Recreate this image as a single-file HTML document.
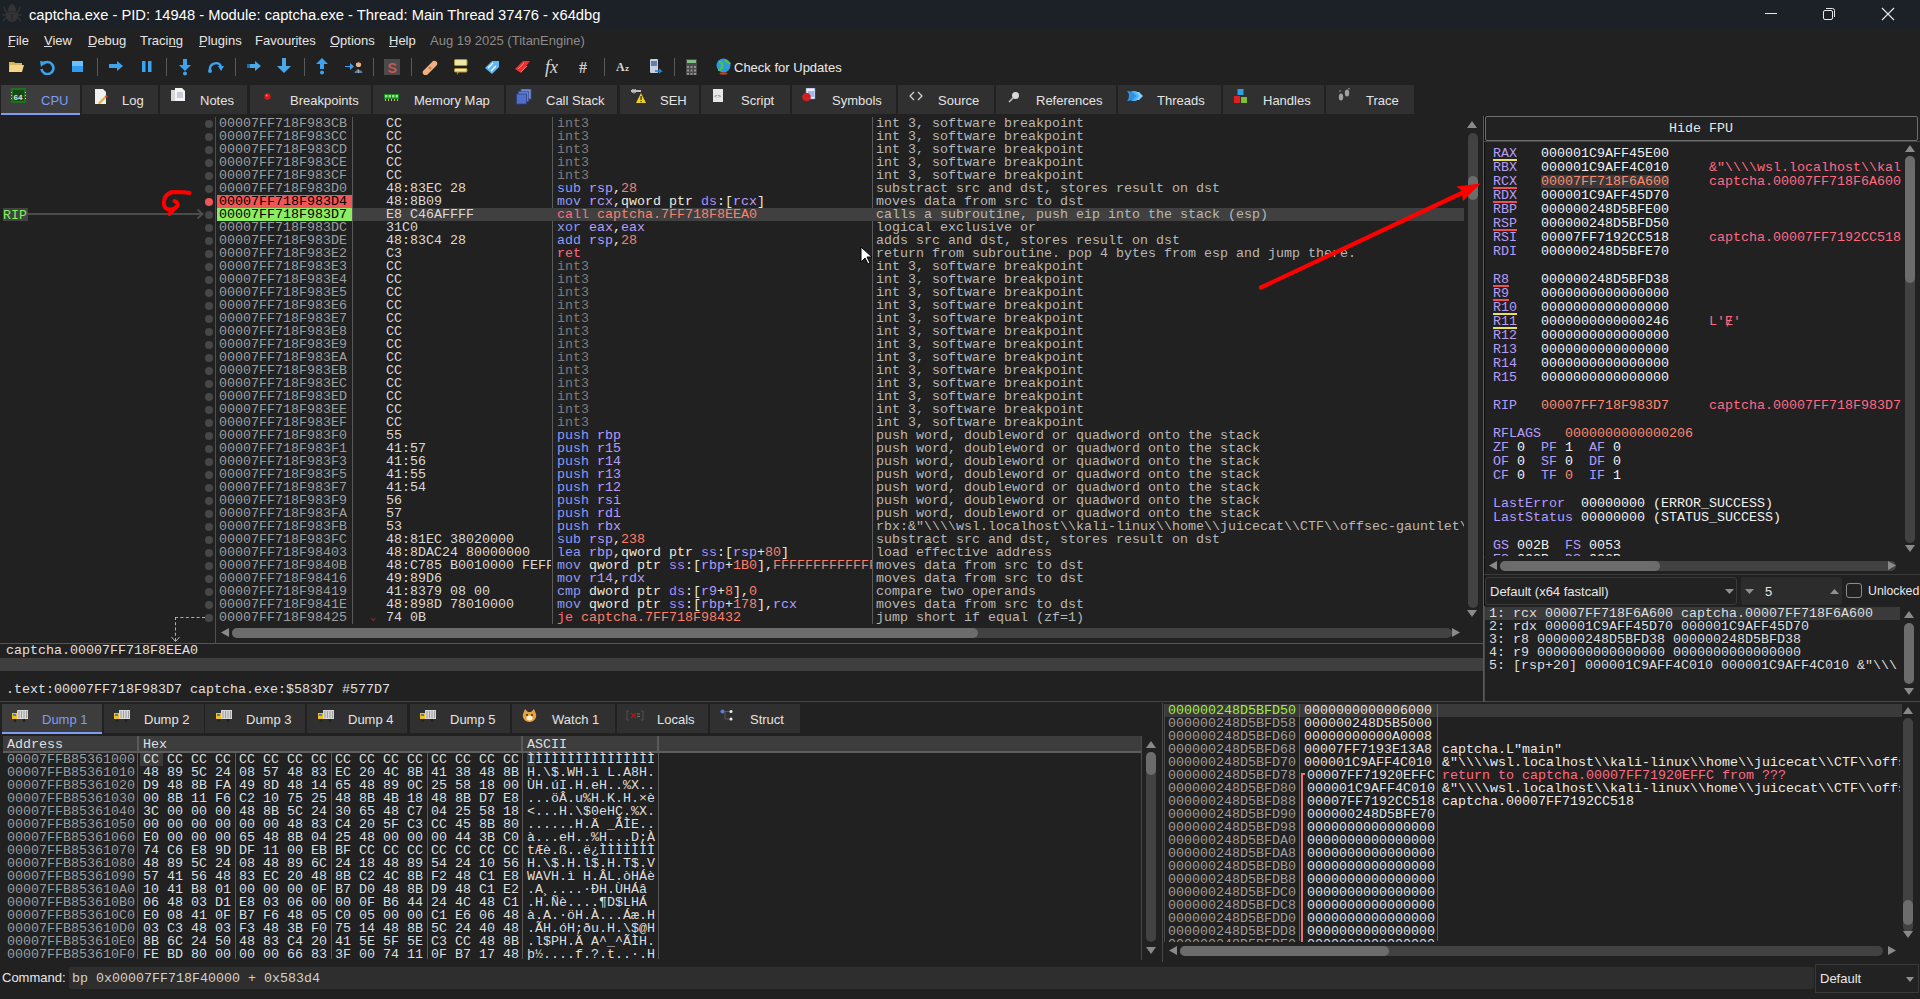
<!DOCTYPE html>
<html><head><meta charset="utf-8"><style>
html,body{margin:0;padding:0;width:1920px;height:999px;overflow:hidden;background:#212121;}
body>div,body>span,body>svg{position:absolute;}
.m{position:absolute;font-family:"Liberation Mono",monospace;font-size:13.333px;line-height:13px;white-space:pre;}
.s{position:absolute;font-family:"Liberation Sans",sans-serif;line-height:1;white-space:pre;}
</style></head><body>
<div style="left:0px;top:0px;width:1920px;height:29px;background:#1c2027;"></div>
<svg style="position:absolute;left:0;top:0" width="26" height="28" viewBox="0 0 26 28"><g fill="#343434"><path d="M7.5 11.5Q9 4 12 4Q15 4 16.5 11.5Z"/><path d="M6 13Q12 11 18 13L18 17Q16 22 12 22Q8 22 6 17Z"/></g><g stroke="#343434" stroke-width="1.4" fill="none"><path d="M4 6.5Q4.5 11 7.5 13"/><path d="M20 6.5Q19.5 11 16.5 13"/><path d="M2 14.8H22"/><path d="M3.2 21.5Q4 18.5 7 17.5"/><path d="M20.8 21.5Q20 18.5 17 17.5"/></g><path d="M12 14V21" stroke="#222" stroke-width="1"/></svg>
<span class="s" style="left:29px;top:7.5px;color:#ffffff;font-size:14.72px;">captcha.exe - PID: 14948 - Module: captcha.exe - Thread: Main Thread 37476 - x64dbg</span>
<div style="left:1765px;top:13px;width:12px;height:1px;background:#e8e8e8;"></div>
<svg style="position:absolute;left:1822px;top:7px" width="14" height="14" viewBox="0 0 14 14"><rect x="1.5" y="3.5" width="9" height="9" rx="1.5" fill="none" stroke="#e8e8e8" stroke-width="1"/><path d="M4 1.5h6.5a2 2 0 0 1 2 2V10" fill="none" stroke="#e8e8e8" stroke-width="1"/></svg>
<svg style="position:absolute;left:1881px;top:7px" width="14" height="14" viewBox="0 0 14 14"><path d="M1 1L13 13M13 1L1 13" stroke="#e8e8e8" stroke-width="1.1"/></svg>
<div style="left:0px;top:29px;width:1920px;height:23px;background:#212121;"></div>
<span class="s" style="left:8px;top:34px;color:#e6e6e6;font-size:13px;">File</span>
<span class="s" style="left:44px;top:34px;color:#e6e6e6;font-size:13px;">View</span>
<span class="s" style="left:88px;top:34px;color:#e6e6e6;font-size:13px;">Debug</span>
<span class="s" style="left:140px;top:34px;color:#e6e6e6;font-size:13px;">Tracing</span>
<span class="s" style="left:199px;top:34px;color:#e6e6e6;font-size:13px;">Plugins</span>
<span class="s" style="left:255px;top:34px;color:#e6e6e6;font-size:13px;">Favourites</span>
<span class="s" style="left:330px;top:34px;color:#e6e6e6;font-size:13px;">Options</span>
<span class="s" style="left:389px;top:34px;color:#e6e6e6;font-size:13px;">Help</span>
<div style="left:8px;top:46px;width:7px;height:1px;background:#d8d8d8;"></div>
<div style="left:44px;top:46px;width:8px;height:1px;background:#d8d8d8;"></div>
<div style="left:88px;top:46px;width:8px;height:1px;background:#d8d8d8;"></div>
<div style="left:169px;top:46px;width:7px;height:1px;background:#d8d8d8;"></div>
<div style="left:199px;top:46px;width:7px;height:1px;background:#d8d8d8;"></div>
<div style="left:294px;top:46px;width:3px;height:1px;background:#d8d8d8;"></div>
<div style="left:330px;top:46px;width:8px;height:1px;background:#d8d8d8;"></div>
<div style="left:389px;top:46px;width:8px;height:1px;background:#d8d8d8;"></div>
<span class="s" style="left:430px;top:34px;color:#8c8c8c;font-size:13px;">Aug 19 2025 (TitanEngine)</span>
<div style="left:0px;top:52px;width:1920px;height:32px;background:#212121;"></div>
<div style="left:97px;top:58px;width:1px;height:18px;background:#5a5a5a;"></div>
<div style="left:166px;top:58px;width:1px;height:18px;background:#5a5a5a;"></div>
<div style="left:235px;top:58px;width:1px;height:18px;background:#5a5a5a;"></div>
<div style="left:304px;top:58px;width:1px;height:18px;background:#5a5a5a;"></div>
<div style="left:373px;top:58px;width:1px;height:18px;background:#5a5a5a;"></div>
<div style="left:411px;top:58px;width:1px;height:18px;background:#5a5a5a;"></div>
<div style="left:604px;top:58px;width:1px;height:18px;background:#5a5a5a;"></div>
<div style="left:674px;top:58px;width:1px;height:18px;background:#5a5a5a;"></div>
<svg style="position:absolute;left:8px;top:59px" width="17" height="14" viewBox="0 0 17 14"><path d="M1 3h5l1 1h7v9H1z" fill="#d8b25c"/><path d="M2 6h14l-2 7H1z" fill="#f2d48a"/></svg>
<svg style="position:absolute;left:39px;top:60px" width="16" height="15" viewBox="0 0 16 15"><path d="M4 4a6 6 0 1 1-1.5 5" fill="none" stroke="#3aa4f0" stroke-width="2.6"/><path d="M1 1l6 1-5 5z" fill="#3aa4f0"/></svg>
<svg style="position:absolute;left:72px;top:61px" width="11" height="11" viewBox="0 0 11 11"><rect width="11" height="11" fill="#2f9cf0"/><rect width="11" height="5" fill="#6cc0ff"/></svg>
<svg style="position:absolute;left:108px;top:60px" width="16" height="12" viewBox="0 0 16 12"><path d="M1 4h8V1l6 5-6 5V8H1z" fill="#3aa4f0"/></svg>
<svg style="position:absolute;left:142px;top:61px" width="10" height="11" viewBox="0 0 10 11"><rect x="0" y="0" width="3.5" height="11" fill="#3aa4f0"/><rect x="6" y="0" width="3.5" height="11" fill="#3aa4f0"/></svg>
<svg style="position:absolute;left:179px;top:59px" width="13" height="17" viewBox="0 0 13 17"><path d="M4 0h4v6h4l-6 6-6-6h4z" fill="#3aa4f0"/><circle cx="6" cy="14.5" r="2" fill="#3aa4f0"/></svg>
<svg style="position:absolute;left:207px;top:61px" width="18" height="12" viewBox="0 0 18 12"><path d="M3 9a6 6 0 0 1 11-4" fill="none" stroke="#3aa4f0" stroke-width="2.4"/><path d="M11 5h6l-3 5z" fill="#3aa4f0"/><circle cx="3" cy="10" r="2" fill="#3aa4f0"/></svg>
<svg style="position:absolute;left:246px;top:60px" width="16" height="12" viewBox="0 0 16 12"><path d="M1 4h8V1l6 5-6 5V8H1z" fill="#4aa8e8"/><path d="M1 4h3v4H1z" fill="#1a6fb0"/></svg>
<svg style="position:absolute;left:277px;top:58px" width="15" height="17" viewBox="0 0 15 17"><path d="M5 0h4v8h5l-7 7-7-7h5z" fill="#4aa8e8"/></svg>
<svg style="position:absolute;left:316px;top:58px" width="12" height="17" viewBox="0 0 12 17"><path d="M6 0l6 6H8v5H4V6H0z" fill="#3aa4f0"/><circle cx="6" cy="14.5" r="2" fill="#3aa4f0"/></svg>
<svg style="position:absolute;left:345px;top:61px" width="18" height="13" viewBox="0 0 18 13"><path d="M0 5h5V2l4 3.5L5 9V6H0z" fill="#3aa4f0"/><circle cx="13.5" cy="3.5" r="2.6" fill="#e0b890"/><path d="M11 1.5q2.5-2 5 0" stroke="#402010" stroke-width="1.5" fill="none"/><path d="M9.5 12c0-4 8-4 8 0z" fill="#4a80c8"/><path d="M13 8l0.5 4" stroke="#e0b060"/></svg>
<svg style="position:absolute;left:384px;top:59px" width="16" height="16" viewBox="0 0 16 16"><rect width="16" height="16" fill="#4a4a4a"/><text x="3.5" y="13.5" font-family="Liberation Sans" font-weight="bold" font-size="14" fill="#c85858">S</text></svg>
<svg style="position:absolute;left:421px;top:59px" width="17" height="16" viewBox="0 0 17 16"><path d="M2 12L12 2a3 3 0 0 1 4 4L6 16a3 3 0 0 1-4-4z" fill="#f0b080"/><circle cx="9" cy="9" r="1.6" fill="#c88050"/></svg>
<svg style="position:absolute;left:454px;top:59px" width="14" height="16" viewBox="0 0 14 16"><rect x="0.5" y="0.5" width="12.5" height="6" rx="1" fill="#ece6a8" stroke="#b09030"/><rect x="0.5" y="9.5" width="12.5" height="3.5" rx="1" fill="#ece6a8" stroke="#b09030"/><path d="M3 13v3l2-3" fill="#b09030"/></svg>
<svg style="position:absolute;left:484px;top:59px" width="16" height="16" viewBox="0 0 16 16"><path d="M1 9l7-7h7v6l-7 7z" fill="#60b8f0"/><path d="M4 9l5-5M7 12l5-5" stroke="#fff" stroke-width="1.2"/></svg>
<svg style="position:absolute;left:514px;top:59px" width="17" height="16" viewBox="0 0 17 16"><path d="M1 10l8-8h7l-9 12z" fill="#f03030"/><path d="M4 10l6-6M7 13l6-6" stroke="#ff8080" stroke-width="1"/></svg>
<span class="s" style="left:545px;top:58px;color:#d8d8d8;font-size:18px;font-family:'Liberation Serif';font-style:italic">fx</span>
<span class="s" style="left:579px;top:60px;color:#d0d0d0;font-size:16px;font-family:'Liberation Serif';font-weight:bold">#</span>
<span class="s" style="left:616px;top:61px;color:#d8d8d8;font-size:12px;font-weight:bold;font-family:'Liberation Serif'">A</span>
<span class="s" style="left:625px;top:65px;color:#d8d8d8;font-size:8px;font-weight:bold">z</span>
<svg style="position:absolute;left:649px;top:59px" width="14" height="17" viewBox="0 0 14 17"><rect x="1" y="0" width="8" height="14" rx="1" fill="#c8d0e0"/><rect x="2" y="2" width="6" height="5" fill="#6080b0"/><path d="M6 12h6l-2-2M12 12l-2 2" stroke="#2080e0" stroke-width="1.6" fill="none"/></svg>
<svg style="position:absolute;left:686px;top:59px" width="11" height="16" viewBox="0 0 11 16"><rect width="11" height="16" fill="#4a4a4a"/><rect x="1" y="1" width="9" height="3" fill="#80c080"/><g fill="#909090"><rect x="1" y="7" width="2" height="2"/><rect x="4.5" y="7" width="2" height="2"/><rect x="8" y="7" width="2" height="2"/><rect x="1" y="10.5" width="2" height="2"/><rect x="4.5" y="10.5" width="2" height="2"/><rect x="8" y="10.5" width="2" height="2"/><rect x="1" y="14" width="2" height="2"/><rect x="4.5" y="14" width="2" height="2"/><rect x="8" y="14" width="2" height="2"/></g></svg>
<svg style="position:absolute;left:716px;top:58px" width="15" height="17" viewBox="0 0 15 17"><circle cx="7.5" cy="7.5" r="7" fill="#2a9ad8"/><path d="M3 4c3 0 4 2 3 5s-3 2-3 4M9 2c1 2 4 2 5 4" stroke="#50c050" stroke-width="2.4" fill="none"/><ellipse cx="7.5" cy="15.5" rx="4" ry="1.2" fill="#c04020"/></svg>
<span class="s" style="left:734px;top:61px;color:#ececec;font-size:13px;">Check for Updates</span>
<div style="left:1px;top:85px;width:79px;height:29px;background:#3d3d3d;"></div>
<span class="s" style="left:41px;top:94px;color:#7f9cf5;font-size:13px;">CPU</span>
<div style="left:82px;top:85px;width:76px;height:29px;background:#303030;"></div>
<span class="s" style="left:122px;top:94px;color:#e4e4e4;font-size:13px;">Log</span>
<div style="left:160px;top:85px;width:87px;height:29px;background:#303030;"></div>
<span class="s" style="left:200px;top:94px;color:#e4e4e4;font-size:13px;">Notes</span>
<div style="left:250px;top:85px;width:121px;height:29px;background:#303030;"></div>
<span class="s" style="left:290px;top:94px;color:#e4e4e4;font-size:13px;">Breakpoints</span>
<div style="left:373px;top:85px;width:131px;height:29px;background:#303030;"></div>
<span class="s" style="left:414px;top:94px;color:#e4e4e4;font-size:13px;">Memory Map</span>
<div style="left:506px;top:85px;width:111px;height:29px;background:#303030;"></div>
<span class="s" style="left:546px;top:94px;color:#e4e4e4;font-size:13px;">Call Stack</span>
<div style="left:620px;top:85px;width:79px;height:29px;background:#303030;"></div>
<span class="s" style="left:660px;top:94px;color:#e4e4e4;font-size:13px;">SEH</span>
<div style="left:701px;top:85px;width:89px;height:29px;background:#303030;"></div>
<span class="s" style="left:741px;top:94px;color:#e4e4e4;font-size:13px;">Script</span>
<div style="left:792px;top:85px;width:104px;height:29px;background:#303030;"></div>
<span class="s" style="left:832px;top:94px;color:#e4e4e4;font-size:13px;">Symbols</span>
<div style="left:898px;top:85px;width:96px;height:29px;background:#303030;"></div>
<span class="s" style="left:938px;top:94px;color:#e4e4e4;font-size:13px;">Source</span>
<div style="left:996px;top:85px;width:120px;height:29px;background:#303030;"></div>
<span class="s" style="left:1036px;top:94px;color:#e4e4e4;font-size:13px;">References</span>
<div style="left:1118px;top:85px;width:103px;height:29px;background:#303030;"></div>
<span class="s" style="left:1157px;top:94px;color:#e4e4e4;font-size:13px;">Threads</span>
<div style="left:1223px;top:85px;width:101px;height:29px;background:#303030;"></div>
<span class="s" style="left:1263px;top:94px;color:#e4e4e4;font-size:13px;">Handles</span>
<div style="left:1326px;top:85px;width:88px;height:29px;background:#303030;"></div>
<span class="s" style="left:1366px;top:94px;color:#e4e4e4;font-size:13px;">Trace</span>
<div style="left:1px;top:113px;width:79px;height:2px;background:#7f9cf5;"></div>
<svg style="position:absolute;left:11px;top:88px" width="15" height="15" viewBox="0 0 15 15"><rect width="15" height="15" fill="#207020"/><rect x="2" y="2" width="11" height="11" fill="#184818"/><text x="2.5" y="11.5" font-family="Liberation Sans" font-weight="bold" font-size="8" fill="#e0e0e0">64</text><g fill="#e8c040"><rect x="0" y="4" width="1" height="1"/><rect x="0" y="7" width="1" height="1"/><rect x="0" y="10" width="1" height="1"/><rect x="14" y="4" width="1" height="1"/><rect x="14" y="7" width="1" height="1"/><rect x="14" y="10" width="1" height="1"/></g></svg>
<svg style="position:absolute;left:94px;top:89px" width="14" height="15" viewBox="0 0 14 15"><path d="M1 0h8l3 3v12H1z" fill="#f0f0f0"/><path d="M4 14l7-7 1.5 1.5-7 7z" fill="#e0b040"/><circle cx="12.5" cy="7.5" r="1.3" fill="#e03030"/></svg>
<svg style="position:absolute;left:171px;top:88px" width="14" height="15" viewBox="0 0 14 15"><path d="M0 2h7l2 2v9H0z" fill="#d8d8d8"/><path d="M4 0h7l3 3v10H4z" fill="#f4f4f4"/><g stroke="#8090b0" stroke-width="0.8"><line x1="6" y1="5" x2="12" y2="5"/><line x1="6" y1="7" x2="12" y2="7"/><line x1="6" y1="9" x2="12" y2="9"/></g></svg>
<svg style="position:absolute;left:264px;top:93px" width="7" height="7" viewBox="0 0 7 7"><circle cx="3.5" cy="3.5" r="3.2" fill="#d81818"/><circle cx="2.7" cy="2.5" r="1" fill="#ff8080"/></svg>
<svg style="position:absolute;left:384px;top:94px" width="15" height="7" viewBox="0 0 15 7"><rect width="15" height="5" fill="#208820"/><g fill="#90e890"><rect x="1" y="1" width="2.5" height="2.5"/><rect x="4.5" y="1" width="2.5" height="2.5"/><rect x="8" y="1" width="2.5" height="2.5"/><rect x="11.5" y="1" width="2.5" height="2.5"/></g><g fill="#d0c040"><rect x="1" y="5" width="1" height="2"/><rect x="4" y="5" width="1" height="2"/><rect x="7" y="5" width="1" height="2"/><rect x="10" y="5" width="1" height="2"/><rect x="13" y="5" width="1" height="2"/></g></svg>
<svg style="position:absolute;left:516px;top:89px" width="16" height="16" viewBox="0 0 16 16"><rect x="5" y="0" width="10" height="10" fill="#7090d8" stroke="#405090" stroke-width="0.8"/><rect x="2.5" y="2.5" width="10" height="10" fill="#6080d0" stroke="#405090" stroke-width="0.8"/><rect x="0.5" y="5" width="10" height="10" fill="#5070c8" stroke="#304080" stroke-width="0.8"/></svg>
<svg style="position:absolute;left:631px;top:89px" width="16" height="15" viewBox="0 0 16 15"><path d="M0 2h10" stroke="#c0c0c0" stroke-width="2"/><circle cx="3" cy="2" r="2" fill="none" stroke="#c0c0c0"/><path d="M10 4l5 10H5z" fill="#f0d020"/><rect x="9.5" y="7" width="1.2" height="4" fill="#202020"/><rect x="9.5" y="12" width="1.2" height="1.2" fill="#202020"/></svg>
<svg style="position:absolute;left:712px;top:88px" width="13" height="15" viewBox="0 0 13 15"><path d="M1 1h10v13H1z" fill="#e8e8e8"/><text x="2" y="10" font-size="6" font-family="Liberation Mono" fill="#505050">&lt;&gt;</text></svg>
<svg style="position:absolute;left:802px;top:88px" width="15" height="15" viewBox="0 0 15 15"><path d="M4 0h9v11H4z" fill="#f0f0ff" stroke="#6080c0" stroke-width="0.6"/><g stroke="#4060c0" stroke-width="0.8"><line x1="6" y1="4" x2="12" y2="4"/><line x1="6" y1="6" x2="12" y2="6"/><line x1="6" y1="8" x2="12" y2="8"/></g><circle cx="4.5" cy="9" r="4.3" fill="#d02020"/></svg>
<svg style="position:absolute;left:909px;top:91px" width="14" height="10" viewBox="0 0 14 10"><path d="M5 1L1 5l4 4M9 1l4 4-4 4" stroke="#d0d0d0" stroke-width="1.3" fill="none"/></svg>
<svg style="position:absolute;left:1008px;top:91px" width="12" height="12" viewBox="0 0 12 12"><circle cx="7.5" cy="4.5" r="3.5" fill="#d8d8d8"/><path d="M5 7L1 11" stroke="#c0c0c0" stroke-width="1.6"/></svg>
<svg style="position:absolute;left:1127px;top:90px" width="17" height="12" viewBox="0 0 17 12"><path d="M0 1Q6 1 9 6Q6 11 0 11Q4 6 0 1Z" fill="#2f8fe0"/><path d="M4 1L9 1L15 6L9 11L4 11L9 6Z" fill="#48b0f8"/><path d="M9 2L12 2L16 6L12 10L9 10L12 6Z" fill="#80d0ff"/></svg>
<svg style="position:absolute;left:1233px;top:89px" width="15" height="15" viewBox="0 0 15 15"><rect x="4.5" y="0" width="6" height="6" fill="#30a0e0"/><rect x="1" y="7" width="6" height="7" fill="#e02020"/><rect x="8" y="8" width="6" height="6" fill="#80c030"/></svg>
<svg style="position:absolute;left:1337px;top:88px" width="14" height="15" viewBox="0 0 14 15"><g fill="#a0a0a0"><ellipse cx="4" cy="9" rx="2.2" ry="3.5"/><ellipse cx="10" cy="5" rx="2.2" ry="3.5"/><circle cx="3" cy="3" r="0.8"/><circle cx="12" cy="0.8" r="0.8"/></g></svg>
<div style="left:0px;top:115px;width:1920px;height:884px;background:#212121;"></div>
<div style="left:215px;top:117px;width:1px;height:526px;background:#4e4e4e;"></div>
<div style="left:352px;top:117px;width:1px;height:507px;background:#5a5a5a;"></div>
<div style="left:552px;top:117px;width:1px;height:507px;background:#5a5a5a;"></div>
<div style="left:872px;top:117px;width:1px;height:507px;background:#5a5a5a;"></div>
<div style="left:204.5px;top:119.6px;width:8px;height:8px;border-radius:50%;background:#474747"></div>
<span class="m" style="left:219px;top:117px;color:#9e9e9e;">00007FF718F983CB</span>
<span class="m" style="left:386px;top:117px;color:#dadada;">CC</span>
<span class="m" style="left:557px;top:117px;color:#7c7c7c;">int3</span>
<span class="m" style="left:876px;top:117px;color:#b8b8b8;width:588px;overflow:hidden">int 3, software breakpoint</span>
<div style="left:204.5px;top:132.6px;width:8px;height:8px;border-radius:50%;background:#474747"></div>
<span class="m" style="left:219px;top:130px;color:#9e9e9e;">00007FF718F983CC</span>
<span class="m" style="left:386px;top:130px;color:#dadada;">CC</span>
<span class="m" style="left:557px;top:130px;color:#7c7c7c;">int3</span>
<span class="m" style="left:876px;top:130px;color:#b8b8b8;width:588px;overflow:hidden">int 3, software breakpoint</span>
<div style="left:204.5px;top:145.6px;width:8px;height:8px;border-radius:50%;background:#474747"></div>
<span class="m" style="left:219px;top:143px;color:#9e9e9e;">00007FF718F983CD</span>
<span class="m" style="left:386px;top:143px;color:#dadada;">CC</span>
<span class="m" style="left:557px;top:143px;color:#7c7c7c;">int3</span>
<span class="m" style="left:876px;top:143px;color:#b8b8b8;width:588px;overflow:hidden">int 3, software breakpoint</span>
<div style="left:204.5px;top:158.6px;width:8px;height:8px;border-radius:50%;background:#474747"></div>
<span class="m" style="left:219px;top:156px;color:#9e9e9e;">00007FF718F983CE</span>
<span class="m" style="left:386px;top:156px;color:#dadada;">CC</span>
<span class="m" style="left:557px;top:156px;color:#7c7c7c;">int3</span>
<span class="m" style="left:876px;top:156px;color:#b8b8b8;width:588px;overflow:hidden">int 3, software breakpoint</span>
<div style="left:204.5px;top:171.6px;width:8px;height:8px;border-radius:50%;background:#474747"></div>
<span class="m" style="left:219px;top:169px;color:#9e9e9e;">00007FF718F983CF</span>
<span class="m" style="left:386px;top:169px;color:#dadada;">CC</span>
<span class="m" style="left:557px;top:169px;color:#7c7c7c;">int3</span>
<span class="m" style="left:876px;top:169px;color:#b8b8b8;width:588px;overflow:hidden">int 3, software breakpoint</span>
<div style="left:204.5px;top:184.6px;width:8px;height:8px;border-radius:50%;background:#474747"></div>
<span class="m" style="left:219px;top:182px;color:#9e9e9e;">00007FF718F983D0</span>
<span class="m" style="left:386px;top:182px;color:#dadada;">48:83EC 28</span>
<span class="m" style="left:557px;top:182px;width:315px;overflow:hidden"><span style="color:#8c9bf7">sub </span><span style="color:#b59dfc">rsp</span><span style="color:#ebe9dc">,</span><span style="color:#ff7f6b">28</span></span>
<span class="m" style="left:876px;top:182px;color:#b8b8b8;width:588px;overflow:hidden">substract src and dst, stores result on dst</span>
<div style="left:204.5px;top:197.6px;width:8px;height:8px;border-radius:50%;background:#f05656"></div>
<div style="left:217px;top:195px;width:135px;height:13px;background:#f05656;"></div>
<span class="m" style="left:219px;top:195px;color:#000000;">00007FF718F983D4</span>
<span class="m" style="left:386px;top:195px;color:#dadada;">48:8B09</span>
<span class="m" style="left:557px;top:195px;width:315px;overflow:hidden"><span style="color:#8c9bf7">mov </span><span style="color:#b59dfc">rcx</span><span style="color:#ebe9dc">,qword ptr </span><span style="color:#a98cf8">ds</span><span style="color:#ebe9dc">:[</span><span style="color:#b59dfc">rcx</span><span style="color:#ebe9dc">]</span></span>
<span class="m" style="left:876px;top:195px;color:#b8b8b8;width:588px;overflow:hidden">moves data from src to dst</span>
<div style="left:204.5px;top:210.6px;width:8px;height:8px;border-radius:50%;background:#474747"></div>
<div style="left:353px;top:208px;width:1111px;height:13px;background:#404040;"></div>
<div style="left:217px;top:208px;width:135px;height:13px;background:#8aee60;"></div>
<span class="m" style="left:219px;top:208px;color:#000000;">00007FF718F983D7</span>
<span class="m" style="left:386px;top:208px;color:#dadada;">E8 C46AFFFF</span>
<span class="m" style="left:557px;top:208px;width:315px;overflow:hidden"><span style="color:#ff6b80">call </span><span style="color:#ff7f6b">captcha.7FF718F8EEA0</span></span>
<span class="m" style="left:876px;top:208px;color:#b8b8b8;width:588px;overflow:hidden">calls a subroutine, push eip into the stack (esp)</span>
<div style="left:204.5px;top:223.6px;width:8px;height:8px;border-radius:50%;background:#474747"></div>
<span class="m" style="left:219px;top:221px;color:#9e9e9e;">00007FF718F983DC</span>
<span class="m" style="left:386px;top:221px;color:#dadada;">31C0</span>
<span class="m" style="left:557px;top:221px;width:315px;overflow:hidden"><span style="color:#8c9bf7">xor </span><span style="color:#b59dfc">eax</span><span style="color:#ebe9dc">,</span><span style="color:#b59dfc">eax</span></span>
<span class="m" style="left:876px;top:221px;color:#b8b8b8;width:588px;overflow:hidden">logical exclusive or</span>
<div style="left:204.5px;top:236.6px;width:8px;height:8px;border-radius:50%;background:#474747"></div>
<span class="m" style="left:219px;top:234px;color:#9e9e9e;">00007FF718F983DE</span>
<span class="m" style="left:386px;top:234px;color:#dadada;">48:83C4 28</span>
<span class="m" style="left:557px;top:234px;width:315px;overflow:hidden"><span style="color:#8c9bf7">add </span><span style="color:#b59dfc">rsp</span><span style="color:#ebe9dc">,</span><span style="color:#ff7f6b">28</span></span>
<span class="m" style="left:876px;top:234px;color:#b8b8b8;width:588px;overflow:hidden">adds src and dst, stores result on dst</span>
<div style="left:204.5px;top:249.6px;width:8px;height:8px;border-radius:50%;background:#474747"></div>
<span class="m" style="left:219px;top:247px;color:#9e9e9e;">00007FF718F983E2</span>
<span class="m" style="left:386px;top:247px;color:#dadada;">C3</span>
<span class="m" style="left:557px;top:247px;width:315px;overflow:hidden"><span style="color:#ff6b80">ret</span></span>
<span class="m" style="left:876px;top:247px;color:#b8b8b8;width:588px;overflow:hidden">return from subroutine. pop 4 bytes from esp and jump there.</span>
<div style="left:204.5px;top:262.6px;width:8px;height:8px;border-radius:50%;background:#474747"></div>
<span class="m" style="left:219px;top:260px;color:#9e9e9e;">00007FF718F983E3</span>
<span class="m" style="left:386px;top:260px;color:#dadada;">CC</span>
<span class="m" style="left:557px;top:260px;color:#7c7c7c;">int3</span>
<span class="m" style="left:876px;top:260px;color:#b8b8b8;width:588px;overflow:hidden">int 3, software breakpoint</span>
<div style="left:204.5px;top:275.6px;width:8px;height:8px;border-radius:50%;background:#474747"></div>
<span class="m" style="left:219px;top:273px;color:#9e9e9e;">00007FF718F983E4</span>
<span class="m" style="left:386px;top:273px;color:#dadada;">CC</span>
<span class="m" style="left:557px;top:273px;color:#7c7c7c;">int3</span>
<span class="m" style="left:876px;top:273px;color:#b8b8b8;width:588px;overflow:hidden">int 3, software breakpoint</span>
<div style="left:204.5px;top:288.6px;width:8px;height:8px;border-radius:50%;background:#474747"></div>
<span class="m" style="left:219px;top:286px;color:#9e9e9e;">00007FF718F983E5</span>
<span class="m" style="left:386px;top:286px;color:#dadada;">CC</span>
<span class="m" style="left:557px;top:286px;color:#7c7c7c;">int3</span>
<span class="m" style="left:876px;top:286px;color:#b8b8b8;width:588px;overflow:hidden">int 3, software breakpoint</span>
<div style="left:204.5px;top:301.6px;width:8px;height:8px;border-radius:50%;background:#474747"></div>
<span class="m" style="left:219px;top:299px;color:#9e9e9e;">00007FF718F983E6</span>
<span class="m" style="left:386px;top:299px;color:#dadada;">CC</span>
<span class="m" style="left:557px;top:299px;color:#7c7c7c;">int3</span>
<span class="m" style="left:876px;top:299px;color:#b8b8b8;width:588px;overflow:hidden">int 3, software breakpoint</span>
<div style="left:204.5px;top:314.6px;width:8px;height:8px;border-radius:50%;background:#474747"></div>
<span class="m" style="left:219px;top:312px;color:#9e9e9e;">00007FF718F983E7</span>
<span class="m" style="left:386px;top:312px;color:#dadada;">CC</span>
<span class="m" style="left:557px;top:312px;color:#7c7c7c;">int3</span>
<span class="m" style="left:876px;top:312px;color:#b8b8b8;width:588px;overflow:hidden">int 3, software breakpoint</span>
<div style="left:204.5px;top:327.6px;width:8px;height:8px;border-radius:50%;background:#474747"></div>
<span class="m" style="left:219px;top:325px;color:#9e9e9e;">00007FF718F983E8</span>
<span class="m" style="left:386px;top:325px;color:#dadada;">CC</span>
<span class="m" style="left:557px;top:325px;color:#7c7c7c;">int3</span>
<span class="m" style="left:876px;top:325px;color:#b8b8b8;width:588px;overflow:hidden">int 3, software breakpoint</span>
<div style="left:204.5px;top:340.6px;width:8px;height:8px;border-radius:50%;background:#474747"></div>
<span class="m" style="left:219px;top:338px;color:#9e9e9e;">00007FF718F983E9</span>
<span class="m" style="left:386px;top:338px;color:#dadada;">CC</span>
<span class="m" style="left:557px;top:338px;color:#7c7c7c;">int3</span>
<span class="m" style="left:876px;top:338px;color:#b8b8b8;width:588px;overflow:hidden">int 3, software breakpoint</span>
<div style="left:204.5px;top:353.6px;width:8px;height:8px;border-radius:50%;background:#474747"></div>
<span class="m" style="left:219px;top:351px;color:#9e9e9e;">00007FF718F983EA</span>
<span class="m" style="left:386px;top:351px;color:#dadada;">CC</span>
<span class="m" style="left:557px;top:351px;color:#7c7c7c;">int3</span>
<span class="m" style="left:876px;top:351px;color:#b8b8b8;width:588px;overflow:hidden">int 3, software breakpoint</span>
<div style="left:204.5px;top:366.6px;width:8px;height:8px;border-radius:50%;background:#474747"></div>
<span class="m" style="left:219px;top:364px;color:#9e9e9e;">00007FF718F983EB</span>
<span class="m" style="left:386px;top:364px;color:#dadada;">CC</span>
<span class="m" style="left:557px;top:364px;color:#7c7c7c;">int3</span>
<span class="m" style="left:876px;top:364px;color:#b8b8b8;width:588px;overflow:hidden">int 3, software breakpoint</span>
<div style="left:204.5px;top:379.6px;width:8px;height:8px;border-radius:50%;background:#474747"></div>
<span class="m" style="left:219px;top:377px;color:#9e9e9e;">00007FF718F983EC</span>
<span class="m" style="left:386px;top:377px;color:#dadada;">CC</span>
<span class="m" style="left:557px;top:377px;color:#7c7c7c;">int3</span>
<span class="m" style="left:876px;top:377px;color:#b8b8b8;width:588px;overflow:hidden">int 3, software breakpoint</span>
<div style="left:204.5px;top:392.6px;width:8px;height:8px;border-radius:50%;background:#474747"></div>
<span class="m" style="left:219px;top:390px;color:#9e9e9e;">00007FF718F983ED</span>
<span class="m" style="left:386px;top:390px;color:#dadada;">CC</span>
<span class="m" style="left:557px;top:390px;color:#7c7c7c;">int3</span>
<span class="m" style="left:876px;top:390px;color:#b8b8b8;width:588px;overflow:hidden">int 3, software breakpoint</span>
<div style="left:204.5px;top:405.6px;width:8px;height:8px;border-radius:50%;background:#474747"></div>
<span class="m" style="left:219px;top:403px;color:#9e9e9e;">00007FF718F983EE</span>
<span class="m" style="left:386px;top:403px;color:#dadada;">CC</span>
<span class="m" style="left:557px;top:403px;color:#7c7c7c;">int3</span>
<span class="m" style="left:876px;top:403px;color:#b8b8b8;width:588px;overflow:hidden">int 3, software breakpoint</span>
<div style="left:204.5px;top:418.6px;width:8px;height:8px;border-radius:50%;background:#474747"></div>
<span class="m" style="left:219px;top:416px;color:#9e9e9e;">00007FF718F983EF</span>
<span class="m" style="left:386px;top:416px;color:#dadada;">CC</span>
<span class="m" style="left:557px;top:416px;color:#7c7c7c;">int3</span>
<span class="m" style="left:876px;top:416px;color:#b8b8b8;width:588px;overflow:hidden">int 3, software breakpoint</span>
<div style="left:204.5px;top:431.6px;width:8px;height:8px;border-radius:50%;background:#474747"></div>
<span class="m" style="left:219px;top:429px;color:#9e9e9e;">00007FF718F983F0</span>
<span class="m" style="left:386px;top:429px;color:#dadada;">55</span>
<span class="m" style="left:557px;top:429px;width:315px;overflow:hidden"><span style="color:#8c9bf7">push </span><span style="color:#b59dfc">rbp</span></span>
<span class="m" style="left:876px;top:429px;color:#b8b8b8;width:588px;overflow:hidden">push word, doubleword or quadword onto the stack</span>
<div style="left:204.5px;top:444.6px;width:8px;height:8px;border-radius:50%;background:#474747"></div>
<span class="m" style="left:219px;top:442px;color:#9e9e9e;">00007FF718F983F1</span>
<span class="m" style="left:386px;top:442px;color:#dadada;">41:57</span>
<span class="m" style="left:557px;top:442px;width:315px;overflow:hidden"><span style="color:#8c9bf7">push </span><span style="color:#b59dfc">r15</span></span>
<span class="m" style="left:876px;top:442px;color:#b8b8b8;width:588px;overflow:hidden">push word, doubleword or quadword onto the stack</span>
<div style="left:204.5px;top:457.6px;width:8px;height:8px;border-radius:50%;background:#474747"></div>
<span class="m" style="left:219px;top:455px;color:#9e9e9e;">00007FF718F983F3</span>
<span class="m" style="left:386px;top:455px;color:#dadada;">41:56</span>
<span class="m" style="left:557px;top:455px;width:315px;overflow:hidden"><span style="color:#8c9bf7">push </span><span style="color:#b59dfc">r14</span></span>
<span class="m" style="left:876px;top:455px;color:#b8b8b8;width:588px;overflow:hidden">push word, doubleword or quadword onto the stack</span>
<div style="left:204.5px;top:470.6px;width:8px;height:8px;border-radius:50%;background:#474747"></div>
<span class="m" style="left:219px;top:468px;color:#9e9e9e;">00007FF718F983F5</span>
<span class="m" style="left:386px;top:468px;color:#dadada;">41:55</span>
<span class="m" style="left:557px;top:468px;width:315px;overflow:hidden"><span style="color:#8c9bf7">push </span><span style="color:#b59dfc">r13</span></span>
<span class="m" style="left:876px;top:468px;color:#b8b8b8;width:588px;overflow:hidden">push word, doubleword or quadword onto the stack</span>
<div style="left:204.5px;top:483.6px;width:8px;height:8px;border-radius:50%;background:#474747"></div>
<span class="m" style="left:219px;top:481px;color:#9e9e9e;">00007FF718F983F7</span>
<span class="m" style="left:386px;top:481px;color:#dadada;">41:54</span>
<span class="m" style="left:557px;top:481px;width:315px;overflow:hidden"><span style="color:#8c9bf7">push </span><span style="color:#b59dfc">r12</span></span>
<span class="m" style="left:876px;top:481px;color:#b8b8b8;width:588px;overflow:hidden">push word, doubleword or quadword onto the stack</span>
<div style="left:204.5px;top:496.6px;width:8px;height:8px;border-radius:50%;background:#474747"></div>
<span class="m" style="left:219px;top:494px;color:#9e9e9e;">00007FF718F983F9</span>
<span class="m" style="left:386px;top:494px;color:#dadada;">56</span>
<span class="m" style="left:557px;top:494px;width:315px;overflow:hidden"><span style="color:#8c9bf7">push </span><span style="color:#b59dfc">rsi</span></span>
<span class="m" style="left:876px;top:494px;color:#b8b8b8;width:588px;overflow:hidden">push word, doubleword or quadword onto the stack</span>
<div style="left:204.5px;top:509.6px;width:8px;height:8px;border-radius:50%;background:#474747"></div>
<span class="m" style="left:219px;top:507px;color:#9e9e9e;">00007FF718F983FA</span>
<span class="m" style="left:386px;top:507px;color:#dadada;">57</span>
<span class="m" style="left:557px;top:507px;width:315px;overflow:hidden"><span style="color:#8c9bf7">push </span><span style="color:#b59dfc">rdi</span></span>
<span class="m" style="left:876px;top:507px;color:#b8b8b8;width:588px;overflow:hidden">push word, doubleword or quadword onto the stack</span>
<div style="left:204.5px;top:522.6px;width:8px;height:8px;border-radius:50%;background:#474747"></div>
<span class="m" style="left:219px;top:520px;color:#9e9e9e;">00007FF718F983FB</span>
<span class="m" style="left:386px;top:520px;color:#dadada;">53</span>
<span class="m" style="left:557px;top:520px;width:315px;overflow:hidden"><span style="color:#8c9bf7">push </span><span style="color:#b59dfc">rbx</span></span>
<span class="m" style="left:876px;top:520px;color:#b8b8b8;width:588px;overflow:hidden">rbx:&amp;"\\\\wsl.localhost\\kali-linux\\home\\juicecat\\CTF\\offsec-gauntlet\</span>
<div style="left:204.5px;top:535.6px;width:8px;height:8px;border-radius:50%;background:#474747"></div>
<span class="m" style="left:219px;top:533px;color:#9e9e9e;">00007FF718F983FC</span>
<span class="m" style="left:386px;top:533px;color:#dadada;">48:81EC 38020000</span>
<span class="m" style="left:557px;top:533px;width:315px;overflow:hidden"><span style="color:#8c9bf7">sub </span><span style="color:#b59dfc">rsp</span><span style="color:#ebe9dc">,</span><span style="color:#ff7f6b">238</span></span>
<span class="m" style="left:876px;top:533px;color:#b8b8b8;width:588px;overflow:hidden">substract src and dst, stores result on dst</span>
<div style="left:204.5px;top:548.6px;width:8px;height:8px;border-radius:50%;background:#474747"></div>
<span class="m" style="left:219px;top:546px;color:#9e9e9e;">00007FF718F98403</span>
<span class="m" style="left:386px;top:546px;color:#dadada;">48:8DAC24 80000000</span>
<span class="m" style="left:557px;top:546px;width:315px;overflow:hidden"><span style="color:#8c9bf7">lea </span><span style="color:#b59dfc">rbp</span><span style="color:#ebe9dc">,qword ptr </span><span style="color:#a98cf8">ss</span><span style="color:#ebe9dc">:[</span><span style="color:#b59dfc">rsp</span><span style="color:#ebe9dc">+</span><span style="color:#ff7f6b">80</span><span style="color:#ebe9dc">]</span></span>
<span class="m" style="left:876px;top:546px;color:#b8b8b8;width:588px;overflow:hidden">load effective address</span>
<div style="left:204.5px;top:561.6px;width:8px;height:8px;border-radius:50%;background:#474747"></div>
<span class="m" style="left:219px;top:559px;color:#9e9e9e;">00007FF718F9840B</span>
<span class="m" style="left:386px;top:559px;color:#dadada;width:165px;overflow:hidden">48:C785 B0010000 FEFF</span>
<span class="m" style="left:557px;top:559px;width:315px;overflow:hidden"><span style="color:#8c9bf7">mov </span><span style="color:#ebe9dc">qword ptr </span><span style="color:#a98cf8">ss</span><span style="color:#ebe9dc">:[</span><span style="color:#b59dfc">rbp</span><span style="color:#ebe9dc">+</span><span style="color:#ff7f6b">1B0</span><span style="color:#ebe9dc">],</span><span style="color:#ff7f6b">FFFFFFFFFFFFF</span></span>
<span class="m" style="left:876px;top:559px;color:#b8b8b8;width:588px;overflow:hidden">moves data from src to dst</span>
<div style="left:204.5px;top:574.6px;width:8px;height:8px;border-radius:50%;background:#474747"></div>
<span class="m" style="left:219px;top:572px;color:#9e9e9e;">00007FF718F98416</span>
<span class="m" style="left:386px;top:572px;color:#dadada;">49:89D6</span>
<span class="m" style="left:557px;top:572px;width:315px;overflow:hidden"><span style="color:#8c9bf7">mov </span><span style="color:#b59dfc">r14</span><span style="color:#ebe9dc">,</span><span style="color:#b59dfc">rdx</span></span>
<span class="m" style="left:876px;top:572px;color:#b8b8b8;width:588px;overflow:hidden">moves data from src to dst</span>
<div style="left:204.5px;top:587.6px;width:8px;height:8px;border-radius:50%;background:#474747"></div>
<span class="m" style="left:219px;top:585px;color:#9e9e9e;">00007FF718F98419</span>
<span class="m" style="left:386px;top:585px;color:#dadada;">41:8379 08 00</span>
<span class="m" style="left:557px;top:585px;width:315px;overflow:hidden"><span style="color:#8c9bf7">cmp </span><span style="color:#ebe9dc">dword ptr </span><span style="color:#a98cf8">ds</span><span style="color:#ebe9dc">:[</span><span style="color:#b59dfc">r9</span><span style="color:#ebe9dc">+</span><span style="color:#ff7f6b">8</span><span style="color:#ebe9dc">],</span><span style="color:#ff7f6b">0</span></span>
<span class="m" style="left:876px;top:585px;color:#b8b8b8;width:588px;overflow:hidden">compare two operands</span>
<div style="left:204.5px;top:600.6px;width:8px;height:8px;border-radius:50%;background:#474747"></div>
<span class="m" style="left:219px;top:598px;color:#9e9e9e;">00007FF718F9841E</span>
<span class="m" style="left:386px;top:598px;color:#dadada;">48:898D 78010000</span>
<span class="m" style="left:557px;top:598px;width:315px;overflow:hidden"><span style="color:#8c9bf7">mov </span><span style="color:#ebe9dc">qword ptr </span><span style="color:#a98cf8">ss</span><span style="color:#ebe9dc">:[</span><span style="color:#b59dfc">rbp</span><span style="color:#ebe9dc">+</span><span style="color:#ff7f6b">178</span><span style="color:#ebe9dc">],</span><span style="color:#b59dfc">rcx</span></span>
<span class="m" style="left:876px;top:598px;color:#b8b8b8;width:588px;overflow:hidden">moves data from src to dst</span>
<div style="left:204.5px;top:613.6px;width:8px;height:8px;border-radius:50%;background:#474747"></div>
<span class="m" style="left:219px;top:611px;color:#9e9e9e;">00007FF718F98425</span>
<span class="m" style="left:386px;top:611px;color:#dadada;">74 0B</span>
<span class="m" style="left:557px;top:611px;width:315px;overflow:hidden"><span style="color:#ff6b80">je </span><span style="color:#ff7f6b">captcha.7FF718F98432</span></span>
<span class="m" style="left:876px;top:611px;color:#b8b8b8;width:588px;overflow:hidden">jump short if equal (zf=1)</span>
<span class="m" style="left:370px;top:611px;color:#c03030;font-size:10px">⌄</span>
<div style="left:175px;top:617px;width:30px;height:0;border-top:1px dashed #b0b0b0"></div>
<div style="left:175px;top:617px;width:0;height:24px;border-left:1px dashed #b0b0b0"></div>
<svg style="position:absolute;left:171px;top:636px" width="9" height="7" viewBox="0 0 9 7"><path d="M0.5 1L4.5 5.5L8.5 1" stroke="#b0b0b0" fill="none"/></svg>
<div style="left:3px;top:208px;width:25px;height:13px;background:#424242;"></div>
<span class="m" style="left:3px;top:209px;color:#80f45a;">RIP</span>
<div style="left:28px;top:213px;width:174px;height:2px;background:#4c4c4c;"></div>
<svg style="position:absolute;left:195px;top:208px" width="10" height="12" viewBox="0 0 10 12"><path d="M2.5 1.5l5 4.5-5 4.5" stroke="#4c4c4c" stroke-width="2" fill="none"/></svg>
<svg style="position:absolute;left:150px;top:180px" width="50" height="40" viewBox="0 0 50 40"><path d="M39.6 13L34 12.2L22 12Q16 14 14.5 19Q12.8 25 15.5 28Q19 30.5 23.5 29Q28.5 26.5 27.5 23.5Q26.5 21.5 24.5 21M26 27L19.5 34" stroke="#ff0000" stroke-width="4" fill="none" stroke-linecap="round" stroke-linejoin="round"/></svg>
<svg style="position:absolute;left:1466px;top:120px" width="12" height="9" viewBox="0 0 12 9"><path d="M6 1l5 7H1z" fill="#8a8a8a"/></svg>
<div style="left:1468px;top:133px;width:10px;height:475px;background:#424242;border-radius:5px"></div>
<div style="left:1468px;top:176px;width:10px;height:24px;background:#6c6c6c;border-radius:5px"></div>
<svg style="position:absolute;left:1466px;top:609px" width="12" height="9" viewBox="0 0 12 9"><path d="M1 1h10l-5 7z" fill="#8a8a8a"/></svg>
<div style="left:215px;top:624px;width:1px;height:0px;background:#000;"></div>
<svg style="position:absolute;left:220px;top:627px" width="10" height="11" viewBox="0 0 10 11"><path d="M9 1v9L1 5.5z" fill="#8a8a8a"/></svg>
<div style="left:232px;top:628px;width:1220px;height:10px;background:#424242;border-radius:5px"></div>
<div style="left:232px;top:628px;width:746px;height:10px;background:#6c6c6c;border-radius:5px"></div>
<svg style="position:absolute;left:1451px;top:627px" width="10" height="11" viewBox="0 0 10 11"><path d="M1 1v9l8-4.5z" fill="#8a8a8a"/></svg>
<div style="left:0px;top:643px;width:1483px;height:1px;background:#555555;"></div>
<svg style="position:absolute;left:860px;top:246px" width="13" height="20" viewBox="0 0 13 20"><path d="M1 1v15l4-4 3 6 2-1-3-6h5z" fill="#ffffff" stroke="#000" stroke-width="1"/></svg>
<div style="left:0px;top:644px;width:1483px;height:14px;background:#212121;"></div>
<span class="m" style="left:6px;top:644px;color:#e0e0e0;">captcha.00007FF718F8EEA0</span>
<div style="left:0px;top:658px;width:1483px;height:13px;background:#3f3f3f;"></div>
<span class="m" style="left:6px;top:683px;color:#e0e0e0;">.text:00007FF718F983D7 captcha.exe:$583D7 #577D7</span>
<div style="left:0px;top:701px;width:1483px;height:1px;background:#444;"></div>
<div style="left:1483px;top:116px;width:1px;height:586px;background:#5a5a5a;"></div>
<div style="left:1484px;top:116px;width:1px;height:586px;background:#0c0c0c;"></div>
<div style="left:1485px;top:116px;width:431px;height:23px;border:1px solid #6e6e6e;border-radius:2px;background:#222"></div>
<span class="m" style="left:1669px;top:122px;color:#e8e8e8;">Hide FPU</span>
<div style="left:1484px;top:141px;width:436px;height:1px;background:#444;"></div>
<div style="left:1493px;top:159px;width:24px;height:2px;background:#e8e060;"></div>
<span class="m" style="left:1493px;top:147px;color:#b59dfc;">RAX</span>
<span class="m" style="left:1541px;top:147px;color:#f2f2f2;">000001C9AFF45E00</span>
<span class="m" style="left:1493px;top:161px;color:#b59dfc;">RBX</span>
<span class="m" style="left:1541px;top:161px;color:#f2f2f2;">000001C9AFF4C010</span>
<span class="m" style="left:1709px;top:161px;color:#ff6b85;width:192px;overflow:hidden">&amp;"\\\\wsl.localhost\\kal</span>
<div style="left:1493px;top:187px;width:24px;height:2px;background:#f05050;"></div>
<span class="m" style="left:1493px;top:175px;color:#b59dfc;">RCX</span>
<div style="left:1541px;top:175px;width:128px;height:13px;background:#3a3a3a;"></div>
<span class="m" style="left:1541px;top:175px;color:#ff8a70;">00007FF718F6A600</span>
<span class="m" style="left:1709px;top:175px;color:#ff6b85;width:192px;overflow:hidden">captcha.00007FF718F6A600</span>
<div style="left:1493px;top:201px;width:24px;height:2px;background:#f05050;"></div>
<span class="m" style="left:1493px;top:189px;color:#b59dfc;">RDX</span>
<span class="m" style="left:1541px;top:189px;color:#f2f2f2;">000001C9AFF45D70</span>
<span class="m" style="left:1493px;top:203px;color:#b59dfc;">RBP</span>
<span class="m" style="left:1541px;top:203px;color:#f2f2f2;">000000248D5BFE00</span>
<div style="left:1493px;top:229px;width:24px;height:2px;background:#f05050;"></div>
<span class="m" style="left:1493px;top:217px;color:#b59dfc;">RSP</span>
<span class="m" style="left:1541px;top:217px;color:#f2f2f2;">000000248D5BFD50</span>
<span class="m" style="left:1493px;top:231px;color:#b59dfc;">RSI</span>
<span class="m" style="left:1541px;top:231px;color:#f2f2f2;">00007FF7192CC518</span>
<span class="m" style="left:1709px;top:231px;color:#ff6b85;width:192px;overflow:hidden">captcha.00007FF7192CC518</span>
<span class="m" style="left:1493px;top:245px;color:#b59dfc;">RDI</span>
<span class="m" style="left:1541px;top:245px;color:#f2f2f2;">000000248D5BFE70</span>
<div style="left:1493px;top:285px;width:16px;height:2px;background:#f05050;"></div>
<span class="m" style="left:1493px;top:273px;color:#b59dfc;">R8</span>
<span class="m" style="left:1541px;top:273px;color:#f2f2f2;">000000248D5BFD38</span>
<div style="left:1493px;top:299px;width:16px;height:2px;background:#f05050;"></div>
<span class="m" style="left:1493px;top:287px;color:#b59dfc;">R9</span>
<span class="m" style="left:1541px;top:287px;color:#f2f2f2;">0000000000000000</span>
<div style="left:1493px;top:313px;width:24px;height:2px;background:#e8e060;"></div>
<span class="m" style="left:1493px;top:301px;color:#b59dfc;">R10</span>
<span class="m" style="left:1541px;top:301px;color:#f2f2f2;">0000000000000000</span>
<div style="left:1493px;top:327px;width:24px;height:2px;background:#e8e060;"></div>
<span class="m" style="left:1493px;top:315px;color:#b59dfc;">R11</span>
<span class="m" style="left:1541px;top:315px;color:#f2f2f2;">0000000000000246</span>
<span class="m" style="left:1709px;top:315px;color:#ff6b85;width:192px;overflow:hidden">L'Ɇ'</span>
<span class="m" style="left:1493px;top:329px;color:#b59dfc;">R12</span>
<span class="m" style="left:1541px;top:329px;color:#f2f2f2;">0000000000000000</span>
<span class="m" style="left:1493px;top:343px;color:#b59dfc;">R13</span>
<span class="m" style="left:1541px;top:343px;color:#f2f2f2;">0000000000000000</span>
<span class="m" style="left:1493px;top:357px;color:#b59dfc;">R14</span>
<span class="m" style="left:1541px;top:357px;color:#f2f2f2;">0000000000000000</span>
<span class="m" style="left:1493px;top:371px;color:#b59dfc;">R15</span>
<span class="m" style="left:1541px;top:371px;color:#f2f2f2;">0000000000000000</span>
<span class="m" style="left:1493px;top:399px;color:#b59dfc;">RIP</span>
<span class="m" style="left:1541px;top:399px;color:#ff8a70;">00007FF718F983D7</span>
<span class="m" style="left:1709px;top:399px;color:#ff6b85;width:192px;overflow:hidden">captcha.00007FF718F983D7</span>
<span class="m" style="left:1493px;top:427px;color:#b59dfc;">RFLAGS</span>
<span class="m" style="left:1565px;top:427px;color:#ff8a70;">0000000000000206</span>
<span class="m" style="left:1493px;top:441px;color:#b59dfc;">ZF</span>
<span class="m" style="left:1517px;top:441px;color:#f2f2f2;">0</span>
<span class="m" style="left:1541px;top:441px;color:#b59dfc;">PF</span>
<span class="m" style="left:1565px;top:441px;color:#f2f2f2;">1</span>
<span class="m" style="left:1589px;top:441px;color:#b59dfc;">AF</span>
<span class="m" style="left:1613px;top:441px;color:#f2f2f2;">0</span>
<span class="m" style="left:1493px;top:455px;color:#b59dfc;">OF</span>
<span class="m" style="left:1517px;top:455px;color:#f2f2f2;">0</span>
<span class="m" style="left:1541px;top:455px;color:#b59dfc;">SF</span>
<span class="m" style="left:1565px;top:455px;color:#f2f2f2;">0</span>
<span class="m" style="left:1589px;top:455px;color:#b59dfc;">DF</span>
<span class="m" style="left:1613px;top:455px;color:#f2f2f2;">0</span>
<span class="m" style="left:1493px;top:469px;color:#b59dfc;">CF</span>
<span class="m" style="left:1517px;top:469px;color:#f2f2f2;">0</span>
<span class="m" style="left:1541px;top:469px;color:#b59dfc;">TF</span>
<span class="m" style="left:1565px;top:469px;color:#ff8a70;">0</span>
<span class="m" style="left:1589px;top:469px;color:#b59dfc;">IF</span>
<span class="m" style="left:1613px;top:469px;color:#f2f2f2;">1</span>
<span class="m" style="left:1493px;top:497px;color:#b59dfc;">LastError</span>
<span class="m" style="left:1581px;top:497px;color:#f2f2f2;">00000000 (ERROR_SUCCESS)</span>
<span class="m" style="left:1493px;top:511px;color:#b59dfc;">LastStatus</span>
<span class="m" style="left:1581px;top:511px;color:#f2f2f2;">00000000 (STATUS_SUCCESS)</span>
<span class="m" style="left:1493px;top:539px;color:#b59dfc;">GS</span>
<span class="m" style="left:1517px;top:539px;color:#f2f2f2;">002B</span>
<span class="m" style="left:1565px;top:539px;color:#b59dfc;">FS</span>
<span class="m" style="left:1589px;top:539px;color:#f2f2f2;">0053</span>
<div style="left:1484px;top:556px;width:420px;height:2px;background:#212121"></div>
<div style="left:1484px;top:553px;width:420px;height:3px;overflow:hidden;position:absolute"><span class="m" style="left:9px;top:0;color:#b59dfc">ES</span><span class="m" style="left:33px;top:0;color:#f2f2f2">002B</span><span class="m" style="left:81px;top:0;color:#b59dfc">DS</span><span class="m" style="left:105px;top:0;color:#f2f2f2">002B</span></div>
<svg style="position:absolute;left:1904px;top:144px" width="12" height="9" viewBox="0 0 12 9"><path d="M6 1l5 7H1z" fill="#8a8a8a"/></svg>
<div style="left:1905px;top:156px;width:10px;height:387px;background:#424242;border-radius:5px"></div>
<div style="left:1905px;top:156px;width:10px;height:127px;background:#6c6c6c;border-radius:5px"></div>
<svg style="position:absolute;left:1904px;top:544px" width="12" height="9" viewBox="0 0 12 9"><path d="M1 1h10l-5 7z" fill="#8a8a8a"/></svg>
<svg style="position:absolute;left:1488px;top:560px" width="10" height="11" viewBox="0 0 10 11"><path d="M9 1v9L1 5.5z" fill="#8a8a8a"/></svg>
<div style="left:1500px;top:561px;width:396px;height:10px;background:#424242;border-radius:5px"></div>
<div style="left:1500px;top:561px;width:160px;height:10px;background:#6c6c6c;border-radius:5px"></div>
<svg style="position:absolute;left:1887px;top:560px" width="10" height="11" viewBox="0 0 10 11"><path d="M1 1v9l8-4.5z" fill="#8a8a8a"/></svg>
<div style="left:1484px;top:574px;width:436px;height:1px;background:#3a3a3a;"></div>
<div style="left:1485px;top:577px;width:252px;height:28px;border:1px solid #3a3a3a;border-radius:3px;background:#222;box-sizing:border-box"></div>
<span class="s" style="left:1490px;top:584.5px;color:#e8e8e8;font-size:13px;">Default (x64 fastcall)</span>
<svg style="position:absolute;left:1725px;top:588.5px" width="10" height="6" viewBox="0 0 10 6"><path d="M0 0h9l-4.5 5z" fill="#909090"/></svg>
<div style="left:1741px;top:577px;width:101px;height:28px;background:#2c2c2c;border-radius:3px"></div>
<svg style="position:absolute;left:1745px;top:588.5px" width="10" height="6" viewBox="0 0 10 6"><path d="M0 0h9l-4.5 5z" fill="#909090"/></svg>
<span class="s" style="left:1765px;top:584.5px;color:#e8e8e8;font-size:13px;">5</span>
<svg style="position:absolute;left:1830px;top:589px" width="10" height="6" viewBox="0 0 10 6"><path d="M0 5h9l-4.5-5z" fill="#909090"/></svg>
<div style="left:1846px;top:583px;width:16px;height:15px;border:1px solid #8a8a8a;border-radius:3px;box-sizing:border-box"></div>
<span class="s" style="left:1868px;top:584.5px;color:#e8e8e8;font-size:12.3px;">Unlocked</span>
<div style="left:1484px;top:606px;width:1px;height:96px;background:#4a4a4a;"></div>
<div style="left:1485px;top:607px;width:415px;height:13px;background:#3a3a3a;"></div>
<span class="m" style="left:1489px;top:607px;color:#dedede;width:410px;overflow:hidden">1: rcx 00007FF718F6A600 captcha.00007FF718F6A600</span>
<span class="m" style="left:1489px;top:620px;color:#dedede;width:410px;overflow:hidden">2: rdx 000001C9AFF45D70 000001C9AFF45D70</span>
<span class="m" style="left:1489px;top:633px;color:#dedede;width:410px;overflow:hidden">3: r8 000000248D5BFD38 000000248D5BFD38</span>
<span class="m" style="left:1489px;top:646px;color:#dedede;width:410px;overflow:hidden">4: r9 0000000000000000 0000000000000000</span>
<span class="m" style="left:1489px;top:659px;color:#dedede;width:410px;overflow:hidden">5: [rsp+20] 000001C9AFF4C010 000001C9AFF4C010 &amp;"\\\</span>
<svg style="position:absolute;left:1903px;top:610px" width="12" height="9" viewBox="0 0 12 9"><path d="M6 1l5 7H1z" fill="#8a8a8a"/></svg>
<div style="left:1904px;top:623px;width:10px;height:61px;background:#6c6c6c;border-radius:5px"></div>
<svg style="position:absolute;left:1903px;top:687px" width="12" height="9" viewBox="0 0 12 9"><path d="M1 1h10l-5 7z" fill="#8a8a8a"/></svg>
<div style="left:1484px;top:701px;width:436px;height:1px;background:#4a4a4a;"></div>
<div style="left:2px;top:704px;width:100px;height:29px;background:#3d3d3d;"></div>
<span class="s" style="left:42px;top:713px;color:#7f9cf5;font-size:13px;">Dump 1</span>
<div style="left:104px;top:704px;width:100px;height:29px;background:#303030;"></div>
<span class="s" style="left:144px;top:713px;color:#e4e4e4;font-size:13px;">Dump 2</span>
<div style="left:205px;top:704px;width:100px;height:29px;background:#303030;"></div>
<span class="s" style="left:246px;top:713px;color:#e4e4e4;font-size:13px;">Dump 3</span>
<div style="left:307px;top:704px;width:100px;height:29px;background:#303030;"></div>
<span class="s" style="left:348px;top:713px;color:#e4e4e4;font-size:13px;">Dump 4</span>
<div style="left:410px;top:704px;width:100px;height:29px;background:#303030;"></div>
<span class="s" style="left:450px;top:713px;color:#e4e4e4;font-size:13px;">Dump 5</span>
<div style="left:512px;top:704px;width:103px;height:29px;background:#303030;"></div>
<span class="s" style="left:552px;top:713px;color:#e4e4e4;font-size:13px;">Watch 1</span>
<div style="left:617px;top:704px;width:91px;height:29px;background:#303030;"></div>
<span class="s" style="left:657px;top:713px;color:#e4e4e4;font-size:13px;">Locals</span>
<div style="left:710px;top:704px;width:90px;height:29px;background:#303030;"></div>
<span class="s" style="left:750px;top:713px;color:#e4e4e4;font-size:13px;">Struct</span>
<div style="left:2px;top:732px;width:100px;height:2px;background:#7f9cf5;"></div>
<svg style="position:absolute;left:12px;top:710px" width="16" height="12" viewBox="0 0 16 12"><rect x="5" y="0" width="11" height="9" fill="#d8d8d8"/><g stroke="#909090" stroke-width="0.8"><line x1="7" y1="1" x2="7" y2="8"/><line x1="9.5" y1="1" x2="9.5" y2="8"/><line x1="12" y1="1" x2="12" y2="8"/><line x1="14.5" y1="1" x2="14.5" y2="8"/></g><rect x="0" y="3" width="5" height="6" fill="#f0c020"/><rect x="1" y="4" width="3" height="2" fill="#4080c0"/><circle cx="3" cy="10.5" r="1.4" fill="#202020"/><circle cx="12" cy="10.5" r="1.4" fill="#202020"/></svg>
<svg style="position:absolute;left:114px;top:710px" width="16" height="12" viewBox="0 0 16 12"><rect x="5" y="0" width="11" height="9" fill="#d8d8d8"/><g stroke="#909090" stroke-width="0.8"><line x1="7" y1="1" x2="7" y2="8"/><line x1="9.5" y1="1" x2="9.5" y2="8"/><line x1="12" y1="1" x2="12" y2="8"/><line x1="14.5" y1="1" x2="14.5" y2="8"/></g><rect x="0" y="3" width="5" height="6" fill="#f0c020"/><rect x="1" y="4" width="3" height="2" fill="#4080c0"/><circle cx="3" cy="10.5" r="1.4" fill="#202020"/><circle cx="12" cy="10.5" r="1.4" fill="#202020"/></svg>
<svg style="position:absolute;left:216px;top:710px" width="16" height="12" viewBox="0 0 16 12"><rect x="5" y="0" width="11" height="9" fill="#d8d8d8"/><g stroke="#909090" stroke-width="0.8"><line x1="7" y1="1" x2="7" y2="8"/><line x1="9.5" y1="1" x2="9.5" y2="8"/><line x1="12" y1="1" x2="12" y2="8"/><line x1="14.5" y1="1" x2="14.5" y2="8"/></g><rect x="0" y="3" width="5" height="6" fill="#f0c020"/><rect x="1" y="4" width="3" height="2" fill="#4080c0"/><circle cx="3" cy="10.5" r="1.4" fill="#202020"/><circle cx="12" cy="10.5" r="1.4" fill="#202020"/></svg>
<svg style="position:absolute;left:318px;top:710px" width="16" height="12" viewBox="0 0 16 12"><rect x="5" y="0" width="11" height="9" fill="#d8d8d8"/><g stroke="#909090" stroke-width="0.8"><line x1="7" y1="1" x2="7" y2="8"/><line x1="9.5" y1="1" x2="9.5" y2="8"/><line x1="12" y1="1" x2="12" y2="8"/><line x1="14.5" y1="1" x2="14.5" y2="8"/></g><rect x="0" y="3" width="5" height="6" fill="#f0c020"/><rect x="1" y="4" width="3" height="2" fill="#4080c0"/><circle cx="3" cy="10.5" r="1.4" fill="#202020"/><circle cx="12" cy="10.5" r="1.4" fill="#202020"/></svg>
<svg style="position:absolute;left:420px;top:710px" width="16" height="12" viewBox="0 0 16 12"><rect x="5" y="0" width="11" height="9" fill="#d8d8d8"/><g stroke="#909090" stroke-width="0.8"><line x1="7" y1="1" x2="7" y2="8"/><line x1="9.5" y1="1" x2="9.5" y2="8"/><line x1="12" y1="1" x2="12" y2="8"/><line x1="14.5" y1="1" x2="14.5" y2="8"/></g><rect x="0" y="3" width="5" height="6" fill="#f0c020"/><rect x="1" y="4" width="3" height="2" fill="#4080c0"/><circle cx="3" cy="10.5" r="1.4" fill="#202020"/><circle cx="12" cy="10.5" r="1.4" fill="#202020"/></svg>
<svg style="position:absolute;left:522px;top:709px" width="15" height="14" viewBox="0 0 15 14"><path d="M1 5l2-5 3 3h3l3-3 2 5c1 4-2 8-6.5 8S0 9 1 5z" fill="#e8a040"/><ellipse cx="7.5" cy="9" rx="3" ry="2.5" fill="#fff0d8"/><circle cx="5" cy="6" r="0.9" fill="#202020"/><circle cx="10" cy="6" r="0.9" fill="#202020"/></svg>
<svg style="position:absolute;left:626px;top:710px" width="18" height="11" viewBox="0 0 18 11"><path d="M3 1H1v9h2M15 1h2v9h-2" stroke="#505050" fill="none"/><path d="M5 3l5 5M10 3L5 8" stroke="#a02020" stroke-width="1.3"/><path d="M11 4h3M11 6.5h3" stroke="#707070"/></svg>
<svg style="position:absolute;left:720px;top:709px" width="14" height="13" viewBox="0 0 14 13"><circle cx="2.5" cy="2.5" r="2" fill="#5080f0"/><circle cx="11" cy="2.5" r="1.6" fill="#e8e8e8"/><circle cx="11" cy="10" r="1.6" fill="#e8e8e8"/><path d="M4 2.5h5M5 2.5v7.5h4" stroke="#707070" stroke-width="0.6" fill="none"/></svg>
<div style="left:3px;top:736px;width:1138px;height:16px;background:#3d3d3d;"></div>
<div style="left:3px;top:751px;width:1138px;height:2px;background:#5e5e5e;"></div>
<div style="left:137px;top:736px;width:2px;height:16px;background:#5a5a5a;"></div>
<div style="left:521px;top:736px;width:2px;height:16px;background:#5a5a5a;"></div>
<div style="left:657px;top:736px;width:2px;height:16px;background:#5a5a5a;"></div>
<span class="m" style="left:7px;top:738px;color:#e0e0e0;">Address</span>
<span class="m" style="left:143px;top:738px;color:#e0e0e0;">Hex</span>
<span class="m" style="left:527px;top:738px;color:#e0e0e0;">ASCII</span>
<div style="left:137px;top:753px;width:1px;height:206px;background:#5a5a5a;"></div>
<div style="left:235px;top:753px;width:1px;height:206px;background:#5a5a5a;"></div>
<div style="left:331px;top:753px;width:1px;height:206px;background:#5a5a5a;"></div>
<div style="left:427px;top:753px;width:1px;height:206px;background:#5a5a5a;"></div>
<div style="left:522px;top:753px;width:1px;height:206px;background:#5a5a5a;"></div>
<div style="left:658px;top:753px;width:1px;height:206px;background:#5a5a5a;"></div>
<div style="left:140px;top:753px;width:23px;height:13px;background:#3a3a3a;"></div>
<div style="left:527px;top:753px;width:8px;height:13px;background:#3a3a3a;"></div>
<span class="m" style="left:7px;top:753px;color:#9e9e9e;">00007FFB85361000</span>
<span class="m" style="left:143px;top:753px;color:#dedede;">CC</span>
<span class="m" style="left:167px;top:753px;color:#dedede;">CC</span>
<span class="m" style="left:191px;top:753px;color:#dedede;">CC</span>
<span class="m" style="left:215px;top:753px;color:#dedede;">CC</span>
<span class="m" style="left:239px;top:753px;color:#dedede;">CC</span>
<span class="m" style="left:263px;top:753px;color:#dedede;">CC</span>
<span class="m" style="left:287px;top:753px;color:#dedede;">CC</span>
<span class="m" style="left:311px;top:753px;color:#dedede;">CC</span>
<span class="m" style="left:335px;top:753px;color:#dedede;">CC</span>
<span class="m" style="left:359px;top:753px;color:#dedede;">CC</span>
<span class="m" style="left:383px;top:753px;color:#dedede;">CC</span>
<span class="m" style="left:407px;top:753px;color:#dedede;">CC</span>
<span class="m" style="left:431px;top:753px;color:#dedede;">CC</span>
<span class="m" style="left:455px;top:753px;color:#dedede;">CC</span>
<span class="m" style="left:479px;top:753px;color:#dedede;">CC</span>
<span class="m" style="left:503px;top:753px;color:#dedede;">CC</span>
<span class="m" style="left:527px;top:753px;color:#dedede;">Ì</span>
<span class="m" style="left:535px;top:753px;color:#dedede;">Ì</span>
<span class="m" style="left:543px;top:753px;color:#dedede;">Ì</span>
<span class="m" style="left:551px;top:753px;color:#dedede;">Ì</span>
<span class="m" style="left:559px;top:753px;color:#dedede;">Ì</span>
<span class="m" style="left:567px;top:753px;color:#dedede;">Ì</span>
<span class="m" style="left:575px;top:753px;color:#dedede;">Ì</span>
<span class="m" style="left:583px;top:753px;color:#dedede;">Ì</span>
<span class="m" style="left:591px;top:753px;color:#dedede;">Ì</span>
<span class="m" style="left:599px;top:753px;color:#dedede;">Ì</span>
<span class="m" style="left:607px;top:753px;color:#dedede;">Ì</span>
<span class="m" style="left:615px;top:753px;color:#dedede;">Ì</span>
<span class="m" style="left:623px;top:753px;color:#dedede;">Ì</span>
<span class="m" style="left:631px;top:753px;color:#dedede;">Ì</span>
<span class="m" style="left:639px;top:753px;color:#dedede;">Ì</span>
<span class="m" style="left:647px;top:753px;color:#dedede;">Ì</span>
<span class="m" style="left:7px;top:766px;color:#9e9e9e;">00007FFB85361010</span>
<span class="m" style="left:143px;top:766px;color:#dedede;">48</span>
<span class="m" style="left:167px;top:766px;color:#dedede;">89</span>
<span class="m" style="left:191px;top:766px;color:#dedede;">5C</span>
<span class="m" style="left:215px;top:766px;color:#dedede;">24</span>
<span class="m" style="left:239px;top:766px;color:#dedede;">08</span>
<span class="m" style="left:263px;top:766px;color:#dedede;">57</span>
<span class="m" style="left:287px;top:766px;color:#dedede;">48</span>
<span class="m" style="left:311px;top:766px;color:#dedede;">83</span>
<span class="m" style="left:335px;top:766px;color:#dedede;">EC</span>
<span class="m" style="left:359px;top:766px;color:#dedede;">20</span>
<span class="m" style="left:383px;top:766px;color:#dedede;">4C</span>
<span class="m" style="left:407px;top:766px;color:#dedede;">8B</span>
<span class="m" style="left:431px;top:766px;color:#dedede;">41</span>
<span class="m" style="left:455px;top:766px;color:#dedede;">38</span>
<span class="m" style="left:479px;top:766px;color:#dedede;">48</span>
<span class="m" style="left:503px;top:766px;color:#dedede;">8B</span>
<span class="m" style="left:527px;top:766px;color:#dedede;">H</span>
<span class="m" style="left:535px;top:766px;color:#dedede;">.</span>
<span class="m" style="left:543px;top:766px;color:#dedede;">\</span>
<span class="m" style="left:551px;top:766px;color:#dedede;">$</span>
<span class="m" style="left:559px;top:766px;color:#dedede;">.</span>
<span class="m" style="left:567px;top:766px;color:#dedede;">W</span>
<span class="m" style="left:575px;top:766px;color:#dedede;">H</span>
<span class="m" style="left:583px;top:766px;color:#dedede;">.</span>
<span class="m" style="left:591px;top:766px;color:#dedede;">ì</span>
<span class="m" style="left:599px;top:766px;color:#dedede;"> </span>
<span class="m" style="left:607px;top:766px;color:#dedede;">L</span>
<span class="m" style="left:615px;top:766px;color:#dedede;">.</span>
<span class="m" style="left:623px;top:766px;color:#dedede;">A</span>
<span class="m" style="left:631px;top:766px;color:#dedede;">8</span>
<span class="m" style="left:639px;top:766px;color:#dedede;">H</span>
<span class="m" style="left:647px;top:766px;color:#dedede;">.</span>
<span class="m" style="left:7px;top:779px;color:#9e9e9e;">00007FFB85361020</span>
<span class="m" style="left:143px;top:779px;color:#dedede;">D9</span>
<span class="m" style="left:167px;top:779px;color:#dedede;">48</span>
<span class="m" style="left:191px;top:779px;color:#dedede;">8B</span>
<span class="m" style="left:215px;top:779px;color:#dedede;">FA</span>
<span class="m" style="left:239px;top:779px;color:#dedede;">49</span>
<span class="m" style="left:263px;top:779px;color:#dedede;">8D</span>
<span class="m" style="left:287px;top:779px;color:#dedede;">48</span>
<span class="m" style="left:311px;top:779px;color:#dedede;">14</span>
<span class="m" style="left:335px;top:779px;color:#dedede;">65</span>
<span class="m" style="left:359px;top:779px;color:#dedede;">48</span>
<span class="m" style="left:383px;top:779px;color:#dedede;">89</span>
<span class="m" style="left:407px;top:779px;color:#dedede;">0C</span>
<span class="m" style="left:431px;top:779px;color:#dedede;">25</span>
<span class="m" style="left:455px;top:779px;color:#dedede;">58</span>
<span class="m" style="left:479px;top:779px;color:#dedede;">18</span>
<span class="m" style="left:503px;top:779px;color:#dedede;">00</span>
<span class="m" style="left:527px;top:779px;color:#dedede;">Ù</span>
<span class="m" style="left:535px;top:779px;color:#dedede;">H</span>
<span class="m" style="left:543px;top:779px;color:#dedede;">.</span>
<span class="m" style="left:551px;top:779px;color:#dedede;">ú</span>
<span class="m" style="left:559px;top:779px;color:#dedede;">I</span>
<span class="m" style="left:567px;top:779px;color:#dedede;">.</span>
<span class="m" style="left:575px;top:779px;color:#dedede;">H</span>
<span class="m" style="left:583px;top:779px;color:#dedede;">.</span>
<span class="m" style="left:591px;top:779px;color:#dedede;">e</span>
<span class="m" style="left:599px;top:779px;color:#dedede;">H</span>
<span class="m" style="left:607px;top:779px;color:#dedede;">.</span>
<span class="m" style="left:615px;top:779px;color:#dedede;">.</span>
<span class="m" style="left:623px;top:779px;color:#dedede;">%</span>
<span class="m" style="left:631px;top:779px;color:#dedede;">X</span>
<span class="m" style="left:639px;top:779px;color:#dedede;">.</span>
<span class="m" style="left:647px;top:779px;color:#dedede;">.</span>
<span class="m" style="left:7px;top:792px;color:#9e9e9e;">00007FFB85361030</span>
<span class="m" style="left:143px;top:792px;color:#dedede;">00</span>
<span class="m" style="left:167px;top:792px;color:#dedede;">8B</span>
<span class="m" style="left:191px;top:792px;color:#dedede;">11</span>
<span class="m" style="left:215px;top:792px;color:#dedede;">F6</span>
<span class="m" style="left:239px;top:792px;color:#dedede;">C2</span>
<span class="m" style="left:263px;top:792px;color:#dedede;">10</span>
<span class="m" style="left:287px;top:792px;color:#dedede;">75</span>
<span class="m" style="left:311px;top:792px;color:#dedede;">25</span>
<span class="m" style="left:335px;top:792px;color:#dedede;">48</span>
<span class="m" style="left:359px;top:792px;color:#dedede;">8B</span>
<span class="m" style="left:383px;top:792px;color:#dedede;">4B</span>
<span class="m" style="left:407px;top:792px;color:#dedede;">18</span>
<span class="m" style="left:431px;top:792px;color:#dedede;">48</span>
<span class="m" style="left:455px;top:792px;color:#dedede;">8B</span>
<span class="m" style="left:479px;top:792px;color:#dedede;">D7</span>
<span class="m" style="left:503px;top:792px;color:#dedede;">E8</span>
<span class="m" style="left:527px;top:792px;color:#dedede;">.</span>
<span class="m" style="left:535px;top:792px;color:#dedede;">.</span>
<span class="m" style="left:543px;top:792px;color:#dedede;">.</span>
<span class="m" style="left:551px;top:792px;color:#dedede;">ö</span>
<span class="m" style="left:559px;top:792px;color:#dedede;">Â</span>
<span class="m" style="left:567px;top:792px;color:#dedede;">.</span>
<span class="m" style="left:575px;top:792px;color:#dedede;">u</span>
<span class="m" style="left:583px;top:792px;color:#dedede;">%</span>
<span class="m" style="left:591px;top:792px;color:#dedede;">H</span>
<span class="m" style="left:599px;top:792px;color:#dedede;">.</span>
<span class="m" style="left:607px;top:792px;color:#dedede;">K</span>
<span class="m" style="left:615px;top:792px;color:#dedede;">.</span>
<span class="m" style="left:623px;top:792px;color:#dedede;">H</span>
<span class="m" style="left:631px;top:792px;color:#dedede;">.</span>
<span class="m" style="left:639px;top:792px;color:#dedede;">×</span>
<span class="m" style="left:647px;top:792px;color:#dedede;">è</span>
<span class="m" style="left:7px;top:805px;color:#9e9e9e;">00007FFB85361040</span>
<span class="m" style="left:143px;top:805px;color:#dedede;">3C</span>
<span class="m" style="left:167px;top:805px;color:#dedede;">00</span>
<span class="m" style="left:191px;top:805px;color:#dedede;">00</span>
<span class="m" style="left:215px;top:805px;color:#dedede;">00</span>
<span class="m" style="left:239px;top:805px;color:#dedede;">48</span>
<span class="m" style="left:263px;top:805px;color:#dedede;">8B</span>
<span class="m" style="left:287px;top:805px;color:#dedede;">5C</span>
<span class="m" style="left:311px;top:805px;color:#dedede;">24</span>
<span class="m" style="left:335px;top:805px;color:#dedede;">30</span>
<span class="m" style="left:359px;top:805px;color:#dedede;">65</span>
<span class="m" style="left:383px;top:805px;color:#dedede;">48</span>
<span class="m" style="left:407px;top:805px;color:#dedede;">C7</span>
<span class="m" style="left:431px;top:805px;color:#dedede;">04</span>
<span class="m" style="left:455px;top:805px;color:#dedede;">25</span>
<span class="m" style="left:479px;top:805px;color:#dedede;">58</span>
<span class="m" style="left:503px;top:805px;color:#dedede;">18</span>
<span class="m" style="left:527px;top:805px;color:#dedede;">&lt;</span>
<span class="m" style="left:535px;top:805px;color:#dedede;">.</span>
<span class="m" style="left:543px;top:805px;color:#dedede;">.</span>
<span class="m" style="left:551px;top:805px;color:#dedede;">.</span>
<span class="m" style="left:559px;top:805px;color:#dedede;">H</span>
<span class="m" style="left:567px;top:805px;color:#dedede;">.</span>
<span class="m" style="left:575px;top:805px;color:#dedede;">\</span>
<span class="m" style="left:583px;top:805px;color:#dedede;">$</span>
<span class="m" style="left:591px;top:805px;color:#dedede;">0</span>
<span class="m" style="left:599px;top:805px;color:#dedede;">e</span>
<span class="m" style="left:607px;top:805px;color:#dedede;">H</span>
<span class="m" style="left:615px;top:805px;color:#dedede;">Ç</span>
<span class="m" style="left:623px;top:805px;color:#dedede;">.</span>
<span class="m" style="left:631px;top:805px;color:#dedede;">%</span>
<span class="m" style="left:639px;top:805px;color:#dedede;">X</span>
<span class="m" style="left:647px;top:805px;color:#dedede;">.</span>
<span class="m" style="left:7px;top:818px;color:#9e9e9e;">00007FFB85361050</span>
<span class="m" style="left:143px;top:818px;color:#dedede;">00</span>
<span class="m" style="left:167px;top:818px;color:#dedede;">00</span>
<span class="m" style="left:191px;top:818px;color:#dedede;">00</span>
<span class="m" style="left:215px;top:818px;color:#dedede;">00</span>
<span class="m" style="left:239px;top:818px;color:#dedede;">00</span>
<span class="m" style="left:263px;top:818px;color:#dedede;">00</span>
<span class="m" style="left:287px;top:818px;color:#dedede;">48</span>
<span class="m" style="left:311px;top:818px;color:#dedede;">83</span>
<span class="m" style="left:335px;top:818px;color:#dedede;">C4</span>
<span class="m" style="left:359px;top:818px;color:#dedede;">20</span>
<span class="m" style="left:383px;top:818px;color:#dedede;">5F</span>
<span class="m" style="left:407px;top:818px;color:#dedede;">C3</span>
<span class="m" style="left:431px;top:818px;color:#dedede;">CC</span>
<span class="m" style="left:455px;top:818px;color:#dedede;">45</span>
<span class="m" style="left:479px;top:818px;color:#dedede;">8B</span>
<span class="m" style="left:503px;top:818px;color:#dedede;">80</span>
<span class="m" style="left:527px;top:818px;color:#dedede;">.</span>
<span class="m" style="left:535px;top:818px;color:#dedede;">.</span>
<span class="m" style="left:543px;top:818px;color:#dedede;">.</span>
<span class="m" style="left:551px;top:818px;color:#dedede;">.</span>
<span class="m" style="left:559px;top:818px;color:#dedede;">.</span>
<span class="m" style="left:567px;top:818px;color:#dedede;">.</span>
<span class="m" style="left:575px;top:818px;color:#dedede;">H</span>
<span class="m" style="left:583px;top:818px;color:#dedede;">.</span>
<span class="m" style="left:591px;top:818px;color:#dedede;">Ä</span>
<span class="m" style="left:599px;top:818px;color:#dedede;"> </span>
<span class="m" style="left:607px;top:818px;color:#dedede;">_</span>
<span class="m" style="left:615px;top:818px;color:#dedede;">Ã</span>
<span class="m" style="left:623px;top:818px;color:#dedede;">Ì</span>
<span class="m" style="left:631px;top:818px;color:#dedede;">E</span>
<span class="m" style="left:639px;top:818px;color:#dedede;">.</span>
<span class="m" style="left:647px;top:818px;color:#dedede;">.</span>
<span class="m" style="left:7px;top:831px;color:#9e9e9e;">00007FFB85361060</span>
<span class="m" style="left:143px;top:831px;color:#dedede;">E0</span>
<span class="m" style="left:167px;top:831px;color:#dedede;">00</span>
<span class="m" style="left:191px;top:831px;color:#dedede;">00</span>
<span class="m" style="left:215px;top:831px;color:#dedede;">00</span>
<span class="m" style="left:239px;top:831px;color:#dedede;">65</span>
<span class="m" style="left:263px;top:831px;color:#dedede;">48</span>
<span class="m" style="left:287px;top:831px;color:#dedede;">8B</span>
<span class="m" style="left:311px;top:831px;color:#dedede;">04</span>
<span class="m" style="left:335px;top:831px;color:#dedede;">25</span>
<span class="m" style="left:359px;top:831px;color:#dedede;">48</span>
<span class="m" style="left:383px;top:831px;color:#dedede;">00</span>
<span class="m" style="left:407px;top:831px;color:#dedede;">00</span>
<span class="m" style="left:431px;top:831px;color:#dedede;">00</span>
<span class="m" style="left:455px;top:831px;color:#dedede;">44</span>
<span class="m" style="left:479px;top:831px;color:#dedede;">3B</span>
<span class="m" style="left:503px;top:831px;color:#dedede;">C0</span>
<span class="m" style="left:527px;top:831px;color:#dedede;">à</span>
<span class="m" style="left:535px;top:831px;color:#dedede;">.</span>
<span class="m" style="left:543px;top:831px;color:#dedede;">.</span>
<span class="m" style="left:551px;top:831px;color:#dedede;">.</span>
<span class="m" style="left:559px;top:831px;color:#dedede;">e</span>
<span class="m" style="left:567px;top:831px;color:#dedede;">H</span>
<span class="m" style="left:575px;top:831px;color:#dedede;">.</span>
<span class="m" style="left:583px;top:831px;color:#dedede;">.</span>
<span class="m" style="left:591px;top:831px;color:#dedede;">%</span>
<span class="m" style="left:599px;top:831px;color:#dedede;">H</span>
<span class="m" style="left:607px;top:831px;color:#dedede;">.</span>
<span class="m" style="left:615px;top:831px;color:#dedede;">.</span>
<span class="m" style="left:623px;top:831px;color:#dedede;">.</span>
<span class="m" style="left:631px;top:831px;color:#dedede;">D</span>
<span class="m" style="left:639px;top:831px;color:#dedede;">;</span>
<span class="m" style="left:647px;top:831px;color:#dedede;">À</span>
<span class="m" style="left:7px;top:844px;color:#9e9e9e;">00007FFB85361070</span>
<span class="m" style="left:143px;top:844px;color:#dedede;">74</span>
<span class="m" style="left:167px;top:844px;color:#dedede;">C6</span>
<span class="m" style="left:191px;top:844px;color:#dedede;">E8</span>
<span class="m" style="left:215px;top:844px;color:#dedede;">9D</span>
<span class="m" style="left:239px;top:844px;color:#dedede;">DF</span>
<span class="m" style="left:263px;top:844px;color:#dedede;">11</span>
<span class="m" style="left:287px;top:844px;color:#dedede;">00</span>
<span class="m" style="left:311px;top:844px;color:#dedede;">EB</span>
<span class="m" style="left:335px;top:844px;color:#dedede;">BF</span>
<span class="m" style="left:359px;top:844px;color:#dedede;">CC</span>
<span class="m" style="left:383px;top:844px;color:#dedede;">CC</span>
<span class="m" style="left:407px;top:844px;color:#dedede;">CC</span>
<span class="m" style="left:431px;top:844px;color:#dedede;">CC</span>
<span class="m" style="left:455px;top:844px;color:#dedede;">CC</span>
<span class="m" style="left:479px;top:844px;color:#dedede;">CC</span>
<span class="m" style="left:503px;top:844px;color:#dedede;">CC</span>
<span class="m" style="left:527px;top:844px;color:#dedede;">t</span>
<span class="m" style="left:535px;top:844px;color:#dedede;">Æ</span>
<span class="m" style="left:543px;top:844px;color:#dedede;">è</span>
<span class="m" style="left:551px;top:844px;color:#dedede;">.</span>
<span class="m" style="left:559px;top:844px;color:#dedede;">ß</span>
<span class="m" style="left:567px;top:844px;color:#dedede;">.</span>
<span class="m" style="left:575px;top:844px;color:#dedede;">.</span>
<span class="m" style="left:583px;top:844px;color:#dedede;">ë</span>
<span class="m" style="left:591px;top:844px;color:#dedede;">¿</span>
<span class="m" style="left:599px;top:844px;color:#dedede;">Ì</span>
<span class="m" style="left:607px;top:844px;color:#dedede;">Ì</span>
<span class="m" style="left:615px;top:844px;color:#dedede;">Ì</span>
<span class="m" style="left:623px;top:844px;color:#dedede;">Ì</span>
<span class="m" style="left:631px;top:844px;color:#dedede;">Ì</span>
<span class="m" style="left:639px;top:844px;color:#dedede;">Ì</span>
<span class="m" style="left:647px;top:844px;color:#dedede;">Ì</span>
<span class="m" style="left:7px;top:857px;color:#9e9e9e;">00007FFB85361080</span>
<span class="m" style="left:143px;top:857px;color:#dedede;">48</span>
<span class="m" style="left:167px;top:857px;color:#dedede;">89</span>
<span class="m" style="left:191px;top:857px;color:#dedede;">5C</span>
<span class="m" style="left:215px;top:857px;color:#dedede;">24</span>
<span class="m" style="left:239px;top:857px;color:#dedede;">08</span>
<span class="m" style="left:263px;top:857px;color:#dedede;">48</span>
<span class="m" style="left:287px;top:857px;color:#dedede;">89</span>
<span class="m" style="left:311px;top:857px;color:#dedede;">6C</span>
<span class="m" style="left:335px;top:857px;color:#dedede;">24</span>
<span class="m" style="left:359px;top:857px;color:#dedede;">18</span>
<span class="m" style="left:383px;top:857px;color:#dedede;">48</span>
<span class="m" style="left:407px;top:857px;color:#dedede;">89</span>
<span class="m" style="left:431px;top:857px;color:#dedede;">54</span>
<span class="m" style="left:455px;top:857px;color:#dedede;">24</span>
<span class="m" style="left:479px;top:857px;color:#dedede;">10</span>
<span class="m" style="left:503px;top:857px;color:#dedede;">56</span>
<span class="m" style="left:527px;top:857px;color:#dedede;">H</span>
<span class="m" style="left:535px;top:857px;color:#dedede;">.</span>
<span class="m" style="left:543px;top:857px;color:#dedede;">\</span>
<span class="m" style="left:551px;top:857px;color:#dedede;">$</span>
<span class="m" style="left:559px;top:857px;color:#dedede;">.</span>
<span class="m" style="left:567px;top:857px;color:#dedede;">H</span>
<span class="m" style="left:575px;top:857px;color:#dedede;">.</span>
<span class="m" style="left:583px;top:857px;color:#dedede;">l</span>
<span class="m" style="left:591px;top:857px;color:#dedede;">$</span>
<span class="m" style="left:599px;top:857px;color:#dedede;">.</span>
<span class="m" style="left:607px;top:857px;color:#dedede;">H</span>
<span class="m" style="left:615px;top:857px;color:#dedede;">.</span>
<span class="m" style="left:623px;top:857px;color:#dedede;">T</span>
<span class="m" style="left:631px;top:857px;color:#dedede;">$</span>
<span class="m" style="left:639px;top:857px;color:#dedede;">.</span>
<span class="m" style="left:647px;top:857px;color:#dedede;">V</span>
<span class="m" style="left:7px;top:870px;color:#9e9e9e;">00007FFB85361090</span>
<span class="m" style="left:143px;top:870px;color:#dedede;">57</span>
<span class="m" style="left:167px;top:870px;color:#dedede;">41</span>
<span class="m" style="left:191px;top:870px;color:#dedede;">56</span>
<span class="m" style="left:215px;top:870px;color:#dedede;">48</span>
<span class="m" style="left:239px;top:870px;color:#dedede;">83</span>
<span class="m" style="left:263px;top:870px;color:#dedede;">EC</span>
<span class="m" style="left:287px;top:870px;color:#dedede;">20</span>
<span class="m" style="left:311px;top:870px;color:#dedede;">48</span>
<span class="m" style="left:335px;top:870px;color:#dedede;">8B</span>
<span class="m" style="left:359px;top:870px;color:#dedede;">C2</span>
<span class="m" style="left:383px;top:870px;color:#dedede;">4C</span>
<span class="m" style="left:407px;top:870px;color:#dedede;">8B</span>
<span class="m" style="left:431px;top:870px;color:#dedede;">F2</span>
<span class="m" style="left:455px;top:870px;color:#dedede;">48</span>
<span class="m" style="left:479px;top:870px;color:#dedede;">C1</span>
<span class="m" style="left:503px;top:870px;color:#dedede;">E8</span>
<span class="m" style="left:527px;top:870px;color:#dedede;">W</span>
<span class="m" style="left:535px;top:870px;color:#dedede;">A</span>
<span class="m" style="left:543px;top:870px;color:#dedede;">V</span>
<span class="m" style="left:551px;top:870px;color:#dedede;">H</span>
<span class="m" style="left:559px;top:870px;color:#dedede;">.</span>
<span class="m" style="left:567px;top:870px;color:#dedede;">ì</span>
<span class="m" style="left:575px;top:870px;color:#dedede;"> </span>
<span class="m" style="left:583px;top:870px;color:#dedede;">H</span>
<span class="m" style="left:591px;top:870px;color:#dedede;">.</span>
<span class="m" style="left:599px;top:870px;color:#dedede;">Â</span>
<span class="m" style="left:607px;top:870px;color:#dedede;">L</span>
<span class="m" style="left:615px;top:870px;color:#dedede;">.</span>
<span class="m" style="left:623px;top:870px;color:#dedede;">ò</span>
<span class="m" style="left:631px;top:870px;color:#dedede;">H</span>
<span class="m" style="left:639px;top:870px;color:#dedede;">Á</span>
<span class="m" style="left:647px;top:870px;color:#dedede;">è</span>
<span class="m" style="left:7px;top:883px;color:#9e9e9e;">00007FFB853610A0</span>
<span class="m" style="left:143px;top:883px;color:#dedede;">10</span>
<span class="m" style="left:167px;top:883px;color:#dedede;">41</span>
<span class="m" style="left:191px;top:883px;color:#dedede;">B8</span>
<span class="m" style="left:215px;top:883px;color:#dedede;">01</span>
<span class="m" style="left:239px;top:883px;color:#dedede;">00</span>
<span class="m" style="left:263px;top:883px;color:#dedede;">00</span>
<span class="m" style="left:287px;top:883px;color:#dedede;">00</span>
<span class="m" style="left:311px;top:883px;color:#dedede;">0F</span>
<span class="m" style="left:335px;top:883px;color:#dedede;">B7</span>
<span class="m" style="left:359px;top:883px;color:#dedede;">D0</span>
<span class="m" style="left:383px;top:883px;color:#dedede;">48</span>
<span class="m" style="left:407px;top:883px;color:#dedede;">8B</span>
<span class="m" style="left:431px;top:883px;color:#dedede;">D9</span>
<span class="m" style="left:455px;top:883px;color:#dedede;">48</span>
<span class="m" style="left:479px;top:883px;color:#dedede;">C1</span>
<span class="m" style="left:503px;top:883px;color:#dedede;">E2</span>
<span class="m" style="left:527px;top:883px;color:#dedede;">.</span>
<span class="m" style="left:535px;top:883px;color:#dedede;">A</span>
<span class="m" style="left:543px;top:883px;color:#dedede;">¸</span>
<span class="m" style="left:551px;top:883px;color:#dedede;">.</span>
<span class="m" style="left:559px;top:883px;color:#dedede;">.</span>
<span class="m" style="left:567px;top:883px;color:#dedede;">.</span>
<span class="m" style="left:575px;top:883px;color:#dedede;">.</span>
<span class="m" style="left:583px;top:883px;color:#dedede;">·</span>
<span class="m" style="left:591px;top:883px;color:#dedede;">Ð</span>
<span class="m" style="left:599px;top:883px;color:#dedede;">H</span>
<span class="m" style="left:607px;top:883px;color:#dedede;">.</span>
<span class="m" style="left:615px;top:883px;color:#dedede;">Ù</span>
<span class="m" style="left:623px;top:883px;color:#dedede;">H</span>
<span class="m" style="left:631px;top:883px;color:#dedede;">Á</span>
<span class="m" style="left:639px;top:883px;color:#dedede;">â</span>
<span class="m" style="left:7px;top:896px;color:#9e9e9e;">00007FFB853610B0</span>
<span class="m" style="left:143px;top:896px;color:#dedede;">06</span>
<span class="m" style="left:167px;top:896px;color:#dedede;">48</span>
<span class="m" style="left:191px;top:896px;color:#dedede;">03</span>
<span class="m" style="left:215px;top:896px;color:#dedede;">D1</span>
<span class="m" style="left:239px;top:896px;color:#dedede;">E8</span>
<span class="m" style="left:263px;top:896px;color:#dedede;">03</span>
<span class="m" style="left:287px;top:896px;color:#dedede;">06</span>
<span class="m" style="left:311px;top:896px;color:#dedede;">00</span>
<span class="m" style="left:335px;top:896px;color:#dedede;">00</span>
<span class="m" style="left:359px;top:896px;color:#dedede;">0F</span>
<span class="m" style="left:383px;top:896px;color:#dedede;">B6</span>
<span class="m" style="left:407px;top:896px;color:#dedede;">44</span>
<span class="m" style="left:431px;top:896px;color:#dedede;">24</span>
<span class="m" style="left:455px;top:896px;color:#dedede;">4C</span>
<span class="m" style="left:479px;top:896px;color:#dedede;">48</span>
<span class="m" style="left:503px;top:896px;color:#dedede;">C1</span>
<span class="m" style="left:527px;top:896px;color:#dedede;">.</span>
<span class="m" style="left:535px;top:896px;color:#dedede;">H</span>
<span class="m" style="left:543px;top:896px;color:#dedede;">.</span>
<span class="m" style="left:551px;top:896px;color:#dedede;">Ñ</span>
<span class="m" style="left:559px;top:896px;color:#dedede;">è</span>
<span class="m" style="left:567px;top:896px;color:#dedede;">.</span>
<span class="m" style="left:575px;top:896px;color:#dedede;">.</span>
<span class="m" style="left:583px;top:896px;color:#dedede;">.</span>
<span class="m" style="left:591px;top:896px;color:#dedede;">.</span>
<span class="m" style="left:599px;top:896px;color:#dedede;">¶</span>
<span class="m" style="left:607px;top:896px;color:#dedede;">D</span>
<span class="m" style="left:615px;top:896px;color:#dedede;">$</span>
<span class="m" style="left:623px;top:896px;color:#dedede;">L</span>
<span class="m" style="left:631px;top:896px;color:#dedede;">H</span>
<span class="m" style="left:639px;top:896px;color:#dedede;">Á</span>
<span class="m" style="left:7px;top:909px;color:#9e9e9e;">00007FFB853610C0</span>
<span class="m" style="left:143px;top:909px;color:#dedede;">E0</span>
<span class="m" style="left:167px;top:909px;color:#dedede;">08</span>
<span class="m" style="left:191px;top:909px;color:#dedede;">41</span>
<span class="m" style="left:215px;top:909px;color:#dedede;">0F</span>
<span class="m" style="left:239px;top:909px;color:#dedede;">B7</span>
<span class="m" style="left:263px;top:909px;color:#dedede;">F6</span>
<span class="m" style="left:287px;top:909px;color:#dedede;">48</span>
<span class="m" style="left:311px;top:909px;color:#dedede;">05</span>
<span class="m" style="left:335px;top:909px;color:#dedede;">C0</span>
<span class="m" style="left:359px;top:909px;color:#dedede;">05</span>
<span class="m" style="left:383px;top:909px;color:#dedede;">00</span>
<span class="m" style="left:407px;top:909px;color:#dedede;">00</span>
<span class="m" style="left:431px;top:909px;color:#dedede;">C1</span>
<span class="m" style="left:455px;top:909px;color:#dedede;">E6</span>
<span class="m" style="left:479px;top:909px;color:#dedede;">06</span>
<span class="m" style="left:503px;top:909px;color:#dedede;">48</span>
<span class="m" style="left:527px;top:909px;color:#dedede;">à</span>
<span class="m" style="left:535px;top:909px;color:#dedede;">.</span>
<span class="m" style="left:543px;top:909px;color:#dedede;">A</span>
<span class="m" style="left:551px;top:909px;color:#dedede;">.</span>
<span class="m" style="left:559px;top:909px;color:#dedede;">·</span>
<span class="m" style="left:567px;top:909px;color:#dedede;">ö</span>
<span class="m" style="left:575px;top:909px;color:#dedede;">H</span>
<span class="m" style="left:583px;top:909px;color:#dedede;">.</span>
<span class="m" style="left:591px;top:909px;color:#dedede;">À</span>
<span class="m" style="left:599px;top:909px;color:#dedede;">.</span>
<span class="m" style="left:607px;top:909px;color:#dedede;">.</span>
<span class="m" style="left:615px;top:909px;color:#dedede;">.</span>
<span class="m" style="left:623px;top:909px;color:#dedede;">Á</span>
<span class="m" style="left:631px;top:909px;color:#dedede;">æ</span>
<span class="m" style="left:639px;top:909px;color:#dedede;">.</span>
<span class="m" style="left:647px;top:909px;color:#dedede;">H</span>
<span class="m" style="left:7px;top:922px;color:#9e9e9e;">00007FFB853610D0</span>
<span class="m" style="left:143px;top:922px;color:#dedede;">03</span>
<span class="m" style="left:167px;top:922px;color:#dedede;">C3</span>
<span class="m" style="left:191px;top:922px;color:#dedede;">48</span>
<span class="m" style="left:215px;top:922px;color:#dedede;">03</span>
<span class="m" style="left:239px;top:922px;color:#dedede;">F3</span>
<span class="m" style="left:263px;top:922px;color:#dedede;">48</span>
<span class="m" style="left:287px;top:922px;color:#dedede;">3B</span>
<span class="m" style="left:311px;top:922px;color:#dedede;">F0</span>
<span class="m" style="left:335px;top:922px;color:#dedede;">75</span>
<span class="m" style="left:359px;top:922px;color:#dedede;">14</span>
<span class="m" style="left:383px;top:922px;color:#dedede;">48</span>
<span class="m" style="left:407px;top:922px;color:#dedede;">8B</span>
<span class="m" style="left:431px;top:922px;color:#dedede;">5C</span>
<span class="m" style="left:455px;top:922px;color:#dedede;">24</span>
<span class="m" style="left:479px;top:922px;color:#dedede;">40</span>
<span class="m" style="left:503px;top:922px;color:#dedede;">48</span>
<span class="m" style="left:527px;top:922px;color:#dedede;">.</span>
<span class="m" style="left:535px;top:922px;color:#dedede;">Ã</span>
<span class="m" style="left:543px;top:922px;color:#dedede;">H</span>
<span class="m" style="left:551px;top:922px;color:#dedede;">.</span>
<span class="m" style="left:559px;top:922px;color:#dedede;">ó</span>
<span class="m" style="left:567px;top:922px;color:#dedede;">H</span>
<span class="m" style="left:575px;top:922px;color:#dedede;">;</span>
<span class="m" style="left:583px;top:922px;color:#dedede;">ð</span>
<span class="m" style="left:591px;top:922px;color:#dedede;">u</span>
<span class="m" style="left:599px;top:922px;color:#dedede;">.</span>
<span class="m" style="left:607px;top:922px;color:#dedede;">H</span>
<span class="m" style="left:615px;top:922px;color:#dedede;">.</span>
<span class="m" style="left:623px;top:922px;color:#dedede;">\</span>
<span class="m" style="left:631px;top:922px;color:#dedede;">$</span>
<span class="m" style="left:639px;top:922px;color:#dedede;">@</span>
<span class="m" style="left:647px;top:922px;color:#dedede;">H</span>
<span class="m" style="left:7px;top:935px;color:#9e9e9e;">00007FFB853610E0</span>
<span class="m" style="left:143px;top:935px;color:#dedede;">8B</span>
<span class="m" style="left:167px;top:935px;color:#dedede;">6C</span>
<span class="m" style="left:191px;top:935px;color:#dedede;">24</span>
<span class="m" style="left:215px;top:935px;color:#dedede;">50</span>
<span class="m" style="left:239px;top:935px;color:#dedede;">48</span>
<span class="m" style="left:263px;top:935px;color:#dedede;">83</span>
<span class="m" style="left:287px;top:935px;color:#dedede;">C4</span>
<span class="m" style="left:311px;top:935px;color:#dedede;">20</span>
<span class="m" style="left:335px;top:935px;color:#dedede;">41</span>
<span class="m" style="left:359px;top:935px;color:#dedede;">5E</span>
<span class="m" style="left:383px;top:935px;color:#dedede;">5F</span>
<span class="m" style="left:407px;top:935px;color:#dedede;">5E</span>
<span class="m" style="left:431px;top:935px;color:#dedede;">C3</span>
<span class="m" style="left:455px;top:935px;color:#dedede;">CC</span>
<span class="m" style="left:479px;top:935px;color:#dedede;">48</span>
<span class="m" style="left:503px;top:935px;color:#dedede;">8B</span>
<span class="m" style="left:527px;top:935px;color:#dedede;">.</span>
<span class="m" style="left:535px;top:935px;color:#dedede;">l</span>
<span class="m" style="left:543px;top:935px;color:#dedede;">$</span>
<span class="m" style="left:551px;top:935px;color:#dedede;">P</span>
<span class="m" style="left:559px;top:935px;color:#dedede;">H</span>
<span class="m" style="left:567px;top:935px;color:#dedede;">.</span>
<span class="m" style="left:575px;top:935px;color:#dedede;">Ä</span>
<span class="m" style="left:583px;top:935px;color:#dedede;"> </span>
<span class="m" style="left:591px;top:935px;color:#dedede;">A</span>
<span class="m" style="left:599px;top:935px;color:#dedede;">^</span>
<span class="m" style="left:607px;top:935px;color:#dedede;">_</span>
<span class="m" style="left:615px;top:935px;color:#dedede;">^</span>
<span class="m" style="left:623px;top:935px;color:#dedede;">Ã</span>
<span class="m" style="left:631px;top:935px;color:#dedede;">Ì</span>
<span class="m" style="left:639px;top:935px;color:#dedede;">H</span>
<span class="m" style="left:647px;top:935px;color:#dedede;">.</span>
<span class="m" style="left:7px;top:948px;color:#9e9e9e;">00007FFB853610F0</span>
<span class="m" style="left:143px;top:948px;color:#dedede;">FE</span>
<span class="m" style="left:167px;top:948px;color:#dedede;">BD</span>
<span class="m" style="left:191px;top:948px;color:#dedede;">80</span>
<span class="m" style="left:215px;top:948px;color:#dedede;">00</span>
<span class="m" style="left:239px;top:948px;color:#dedede;">00</span>
<span class="m" style="left:263px;top:948px;color:#dedede;">00</span>
<span class="m" style="left:287px;top:948px;color:#dedede;">66</span>
<span class="m" style="left:311px;top:948px;color:#dedede;">83</span>
<span class="m" style="left:335px;top:948px;color:#dedede;">3F</span>
<span class="m" style="left:359px;top:948px;color:#dedede;">00</span>
<span class="m" style="left:383px;top:948px;color:#dedede;">74</span>
<span class="m" style="left:407px;top:948px;color:#dedede;">11</span>
<span class="m" style="left:431px;top:948px;color:#dedede;">0F</span>
<span class="m" style="left:455px;top:948px;color:#dedede;">B7</span>
<span class="m" style="left:479px;top:948px;color:#dedede;">17</span>
<span class="m" style="left:503px;top:948px;color:#dedede;">48</span>
<span class="m" style="left:527px;top:948px;color:#dedede;">þ</span>
<span class="m" style="left:535px;top:948px;color:#dedede;">½</span>
<span class="m" style="left:543px;top:948px;color:#dedede;">.</span>
<span class="m" style="left:551px;top:948px;color:#dedede;">.</span>
<span class="m" style="left:559px;top:948px;color:#dedede;">.</span>
<span class="m" style="left:567px;top:948px;color:#dedede;">.</span>
<span class="m" style="left:575px;top:948px;color:#dedede;">f</span>
<span class="m" style="left:583px;top:948px;color:#dedede;">.</span>
<span class="m" style="left:591px;top:948px;color:#dedede;">?</span>
<span class="m" style="left:599px;top:948px;color:#dedede;">.</span>
<span class="m" style="left:607px;top:948px;color:#dedede;">t</span>
<span class="m" style="left:615px;top:948px;color:#dedede;">.</span>
<span class="m" style="left:623px;top:948px;color:#dedede;">.</span>
<span class="m" style="left:631px;top:948px;color:#dedede;">·</span>
<span class="m" style="left:639px;top:948px;color:#dedede;">.</span>
<span class="m" style="left:647px;top:948px;color:#dedede;">H</span>
<svg style="position:absolute;left:1145px;top:740px" width="12" height="9" viewBox="0 0 12 9"><path d="M6 1l5 7H1z" fill="#8a8a8a"/></svg>
<div style="left:1146px;top:752px;width:10px;height:190px;background:#424242;border-radius:5px"></div>
<div style="left:1146px;top:752px;width:10px;height:23px;background:#6c6c6c;border-radius:5px"></div>
<svg style="position:absolute;left:1145px;top:946px" width="12" height="9" viewBox="0 0 12 9"><path d="M1 1h10l-5 7z" fill="#8a8a8a"/></svg>
<div style="left:1141px;top:736px;width:1px;height:224px;background:#4a4a4a;"></div>
<div style="left:1162px;top:703px;width:1px;height:260px;background:#4a4a4a;"></div>
<div style="left:1164px;top:704px;width:738px;height:13px;background:#3a3a3a;"></div>
<div style="left:1164px;top:704px;width:1px;height:250px;background:#4a4a4a;"></div>
<div style="left:1299px;top:704px;width:1px;height:237px;background:#5a5a5a;"></div>
<div style="left:1437px;top:704px;width:1px;height:237px;background:#5a5a5a;"></div>
<span class="m" style="left:1168px;top:704px;color:#9ef03c;">000000248D5BFD50</span>
<span class="m" style="left:1304px;top:704px;color:#e2e2e2;">0000000000006000</span>
<span class="m" style="left:1168px;top:717px;color:#9e9e9e;">000000248D5BFD58</span>
<span class="m" style="left:1304px;top:717px;color:#e2e2e2;">000000248D5B5000</span>
<span class="m" style="left:1168px;top:730px;color:#9e9e9e;">000000248D5BFD60</span>
<span class="m" style="left:1304px;top:730px;color:#e2e2e2;">00000000000A0008</span>
<span class="m" style="left:1168px;top:743px;color:#9e9e9e;">000000248D5BFD68</span>
<span class="m" style="left:1304px;top:743px;color:#e2e2e2;">00007FF7193E13A8</span>
<span class="m" style="left:1442px;top:743px;color:#ececec;width:458px;overflow:hidden">captcha.L"main"</span>
<span class="m" style="left:1168px;top:756px;color:#9e9e9e;">000000248D5BFD70</span>
<span class="m" style="left:1304px;top:756px;color:#e2e2e2;">000001C9AFF4C010</span>
<span class="m" style="left:1442px;top:756px;color:#ececec;width:458px;overflow:hidden">&amp;"\\\\wsl.localhost\\kali-linux\\home\\juicecat\\CTF\\offs</span>
<span class="m" style="left:1168px;top:769px;color:#9e9e9e;">000000248D5BFD78</span>
<span class="m" style="left:1307px;top:769px;color:#e2e2e2;">00007FF71920EFFC</span>
<span class="m" style="left:1442px;top:769px;color:#ff6b85;width:458px;overflow:hidden">return to captcha.00007FF71920EFFC from ???</span>
<span class="m" style="left:1168px;top:782px;color:#9e9e9e;">000000248D5BFD80</span>
<span class="m" style="left:1307px;top:782px;color:#e2e2e2;">000001C9AFF4C010</span>
<span class="m" style="left:1442px;top:782px;color:#ececec;width:458px;overflow:hidden">&amp;"\\\\wsl.localhost\\kali-linux\\home\\juicecat\\CTF\\offs</span>
<span class="m" style="left:1168px;top:795px;color:#9e9e9e;">000000248D5BFD88</span>
<span class="m" style="left:1307px;top:795px;color:#e2e2e2;">00007FF7192CC518</span>
<span class="m" style="left:1442px;top:795px;color:#ececec;width:458px;overflow:hidden">captcha.00007FF7192CC518</span>
<span class="m" style="left:1168px;top:808px;color:#9e9e9e;">000000248D5BFD90</span>
<span class="m" style="left:1307px;top:808px;color:#e2e2e2;">000000248D5BFE70</span>
<span class="m" style="left:1168px;top:821px;color:#9e9e9e;">000000248D5BFD98</span>
<span class="m" style="left:1307px;top:821px;color:#e2e2e2;">0000000000000000</span>
<span class="m" style="left:1168px;top:834px;color:#9e9e9e;">000000248D5BFDA0</span>
<span class="m" style="left:1307px;top:834px;color:#e2e2e2;">0000000000000000</span>
<span class="m" style="left:1168px;top:847px;color:#9e9e9e;">000000248D5BFDA8</span>
<span class="m" style="left:1307px;top:847px;color:#e2e2e2;">0000000000000000</span>
<span class="m" style="left:1168px;top:860px;color:#9e9e9e;">000000248D5BFDB0</span>
<span class="m" style="left:1307px;top:860px;color:#e2e2e2;">0000000000000000</span>
<span class="m" style="left:1168px;top:873px;color:#9e9e9e;">000000248D5BFDB8</span>
<span class="m" style="left:1307px;top:873px;color:#e2e2e2;">0000000000000000</span>
<span class="m" style="left:1168px;top:886px;color:#9e9e9e;">000000248D5BFDC0</span>
<span class="m" style="left:1307px;top:886px;color:#e2e2e2;">0000000000000000</span>
<span class="m" style="left:1168px;top:899px;color:#9e9e9e;">000000248D5BFDC8</span>
<span class="m" style="left:1307px;top:899px;color:#e2e2e2;">0000000000000000</span>
<span class="m" style="left:1168px;top:912px;color:#9e9e9e;">000000248D5BFDD0</span>
<span class="m" style="left:1307px;top:912px;color:#e2e2e2;">0000000000000000</span>
<span class="m" style="left:1168px;top:925px;color:#9e9e9e;">000000248D5BFDD8</span>
<span class="m" style="left:1307px;top:925px;color:#e2e2e2;">0000000000000000</span>
<span class="m" style="left:1168px;top:938px;color:#9e9e9e;">000000248D5BFDE0</span>
<span class="m" style="left:1307px;top:938px;color:#e2e2e2;">0000000000000000</span>
<div style="left:1301px;top:773px;width:2px;height:170px;background:#f07070;"></div>
<div style="left:1301px;top:773px;width:4px;height:2px;background:#f07070;"></div>
<div style="left:1164px;top:942px;width:738px;height:20px;background:#212121;"></div>
<svg style="position:absolute;left:1168px;top:945px" width="10" height="11" viewBox="0 0 10 11"><path d="M9 1v9L1 5.5z" fill="#8a8a8a"/></svg>
<div style="left:1180px;top:946px;width:703px;height:10px;background:#424242;border-radius:5px"></div>
<div style="left:1180px;top:946px;width:209px;height:10px;background:#6c6c6c;border-radius:5px"></div>
<svg style="position:absolute;left:1887px;top:945px" width="10" height="11" viewBox="0 0 10 11"><path d="M1 1v9l8-4.5z" fill="#8a8a8a"/></svg>
<svg style="position:absolute;left:1902px;top:706px" width="12" height="9" viewBox="0 0 12 9"><path d="M6 1l5 7H1z" fill="#8a8a8a"/></svg>
<div style="left:1903px;top:718px;width:10px;height:214px;background:#424242;border-radius:5px"></div>
<div style="left:1903px;top:900px;width:10px;height:25px;background:#6c6c6c;border-radius:5px"></div>
<svg style="position:absolute;left:1902px;top:930px" width="12" height="9" viewBox="0 0 12 9"><path d="M1 1h10l-5 7z" fill="#8a8a8a"/></svg>
<div style="left:0px;top:960px;width:1141px;height:6px;background:#212121;"></div>
<div style="left:0px;top:962px;width:1920px;height:37px;background:#212121;"></div>
<span class="s" style="left:2px;top:971px;color:#e8e8e8;font-size:13px;">Command:</span>
<div style="left:69px;top:967px;width:1745px;height:22px;background:#2e2e2e;border-radius:2px"></div>
<span class="m" style="left:72px;top:972px;color:#d0d0d0;">bp 0x00007FF718F40000 + 0x583d4</span>
<div style="left:1815px;top:964px;width:104px;height:29px;border:1px solid #3a3a3a;background:#222;box-sizing:border-box"></div>
<span class="s" style="left:1820px;top:972px;color:#e8e8e8;font-size:13px;">Default</span>
<svg style="position:absolute;left:1906px;top:977px" width="9" height="6" viewBox="0 0 9 6"><path d="M0 0h8l-4 5z" fill="#909090"/></svg>
<svg style="position:absolute;left:1250px;top:175px" width="240" height="125" viewBox="0 0 240 125"><path d="M11 112.5L212 18" stroke="#ff0000" stroke-width="4.2" stroke-linecap="round"/><path d="M230.5 8.5L206.5 11.5L211.5 15.5L213 26z" fill="#ff0000"/></svg>
</body></html>
